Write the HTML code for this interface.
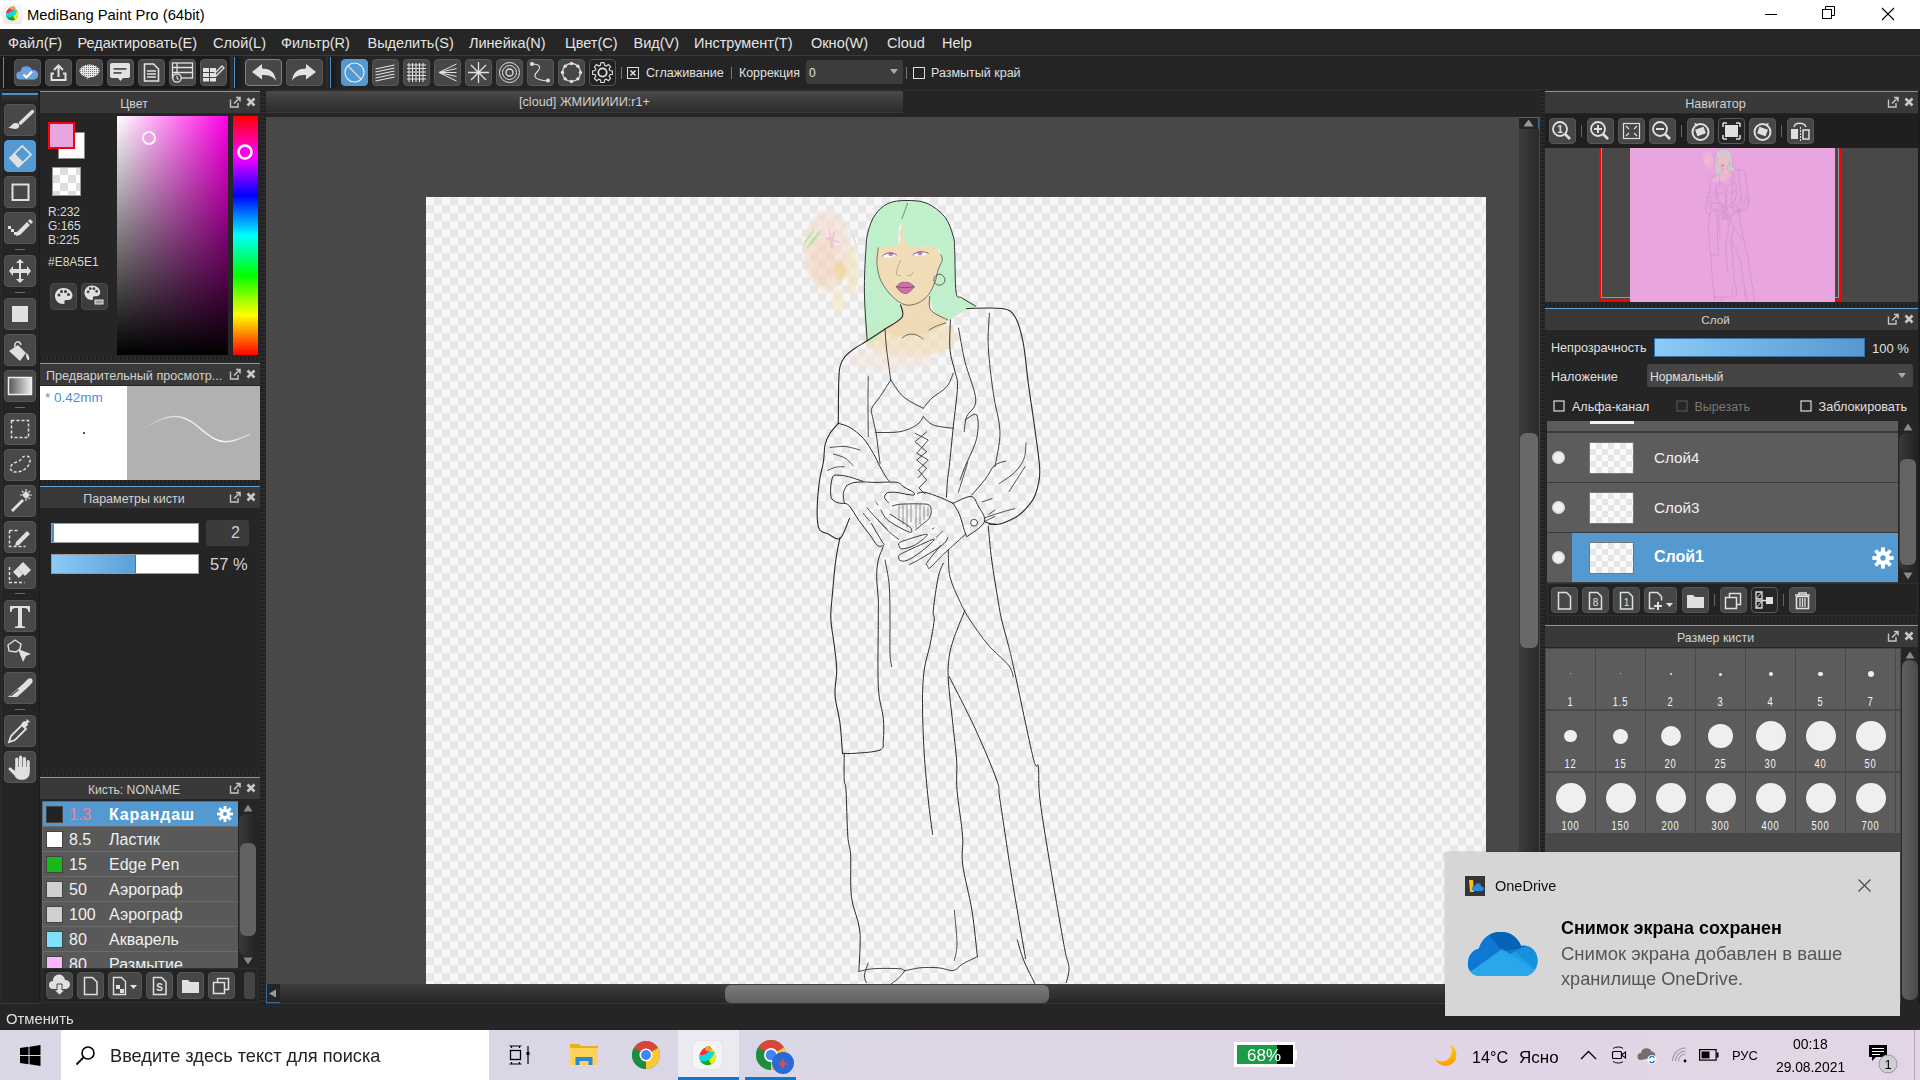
<!DOCTYPE html>
<html><head><meta charset="utf-8">
<style>
*{box-sizing:border-box;margin:0;padding:0}
html,body{width:1920px;height:1080px;overflow:hidden;background:#252525;font-family:"Liberation Sans",sans-serif;color:#ddd}
.a{position:absolute}
.t{position:absolute;white-space:nowrap;line-height:1}
.b{position:absolute;background:#474747;border:1px solid #585858;border-radius:4px}
svg{position:absolute;overflow:visible}

</style></head><body>
<div class="a" style="left:0px;top:0px;width:1920px;height:29px;background:#fff"></div>
<div class="a" style="left:0px;top:29px;width:1920px;height:26px;background:#262626"></div>
<div class="a" style="left:0px;top:55px;width:1920px;height:1px;background:#3a3a3a"></div>
<div class="a" style="left:0px;top:56px;width:1920px;height:33px;background:#242424"></div>
<div class="a" style="left:0px;top:56px;width:230px;height:33px;background:#1a1a1a"></div>
<div class="a" style="left:235px;top:56px;width:10px;height:33px;background:linear-gradient(90deg,#1a1a1a,#242424)"></div>
<div class="a" style="left:331px;top:56px;width:10px;height:33px;background:linear-gradient(90deg,#1a1a1a,#242424)"></div>
<div class="a" style="left:0px;top:89px;width:1920px;height:941px;background:#252525"></div>
<div class="a" style="left:2.5px;top:4px;width:19px;height:19.5px;background:linear-gradient(#f8f8f8,#ebebeb);border-radius:4px;box-shadow:0 0 1px #ccc"></div>
<svg style="left:0px;top:0px;" width="24" height="24" viewBox="0 0 24 24"><defs><clipPath id="drp"><path d="M13.6 6.3C10 7 6 10.2 6 14.6 6 18.2 8.6 20.6 12 20.6 15.4 20.6 18.1 18.2 18.1 14.6 18.1 11.6 16.5 9.4 13.6 6.3z"/></clipPath></defs><g clip-path="url(#drp)"><rect x="0" y="0" width="24" height="24" fill="#18a818"/><ellipse cx="17" cy="14" rx="4" ry="6" fill="#f0f000"/><path d="M5 12C9 10 13 9 17 10.5 16 15 13 17 9 17.5 6 17.5 5 16 5 12z" fill="#10d8e0"/><path d="M5 5H15C15 9 12 12 8 13L5 13z" fill="#ff2a40"/><path d="M10 5H16L15 9C13 10 11 10 10 9z" fill="#ffa030"/></g></svg>
<div class="t" style="left:27px;top:7.5px;font-size:14.8px;color:#000;">MediBang Paint Pro (64bit)</div>
<div class="a" style="left:1765px;top:14px;width:12px;height:1px;background:#000"></div>
<svg style="left:1822px;top:6px;" width="14" height="14" viewBox="0 0 14 14"><rect x="0.5" y="3.5" width="9" height="9" fill="none" stroke="#000"/><path d="M3.5 3.5V0.5H12.5V9.5H9.5" fill="none" stroke="#000"/></svg>
<svg style="left:1881px;top:7px;" width="14" height="14" viewBox="0 0 14 14"><path d="M1 1L13 13M13 1L1 13" stroke="#000" stroke-width="1.1"/></svg>
<div class="t" style="left:8px;top:35.5px;font-size:14.5px;color:#e4e4e4;">Файл(F)</div>
<div class="t" style="left:77.5px;top:35.5px;font-size:14.5px;color:#e4e4e4;">Редактировать(E)</div>
<div class="t" style="left:213px;top:35.5px;font-size:14.5px;color:#e4e4e4;">Слой(L)</div>
<div class="t" style="left:281px;top:35.5px;font-size:14.5px;color:#e4e4e4;">Фильтр(R)</div>
<div class="t" style="left:367.5px;top:35.5px;font-size:14.5px;color:#e4e4e4;">Выделить(S)</div>
<div class="t" style="left:469px;top:35.5px;font-size:14.5px;color:#e4e4e4;">Линейка(N)</div>
<div class="t" style="left:565px;top:35.5px;font-size:14.5px;color:#e4e4e4;">Цвет(C)</div>
<div class="t" style="left:633.5px;top:35.5px;font-size:14.5px;color:#e4e4e4;">Вид(V)</div>
<div class="t" style="left:694px;top:35.5px;font-size:14.5px;color:#e4e4e4;">Инструмент(T)</div>
<div class="t" style="left:811px;top:35.5px;font-size:14.5px;color:#e4e4e4;">Окно(W)</div>
<div class="t" style="left:887px;top:35.5px;font-size:14.5px;color:#e4e4e4;">Cloud</div>
<div class="t" style="left:942px;top:35.5px;font-size:14.5px;color:#e4e4e4;">Help</div>
<div class="a" style="left:3px;top:57px;width:1px;height:31px;background:#4a8fcc"></div>
<div class="a" style="left:230px;top:56px;width:3px;height:33px;background:#2c2c2c"></div>
<div class="a" style="left:234px;top:57px;width:1px;height:31px;background:#4a8fcc"></div>
<div class="a" style="left:326px;top:56px;width:2px;height:33px;background:#2c2c2c"></div>
<div class="a" style="left:330px;top:57px;width:1px;height:31px;background:#4a8fcc"></div>
<div class="b" style="left:14px;top:59px;width:27px;height:27px;"></div>
<div class="b" style="left:45px;top:59px;width:27px;height:27px;"></div>
<div class="b" style="left:76px;top:59px;width:27px;height:27px;"></div>
<div class="b" style="left:107px;top:59px;width:27px;height:27px;"></div>
<div class="b" style="left:138px;top:59px;width:27px;height:27px;"></div>
<div class="b" style="left:169px;top:59px;width:27px;height:27px;"></div>
<div class="b" style="left:200px;top:59px;width:27px;height:27px;"></div>
<svg style="left:14px;top:59px;" width="27" height="27" viewBox="0 0 27 27"><path d="M6 20.5a4 4 0 0 1 0.5-8 6 6 0 0 1 11.5-1.5 4.8 4.8 0 0 1 2.5 9.5z" fill="#6aa3dc"/><path d="M9.5 15.5l3 3 5.5-6" stroke="#fff" stroke-width="2.2" fill="none"/></svg>
<svg style="left:45px;top:59px;" width="27" height="27" viewBox="0 0 27 27"><path d="M9 14.5h-2.5v6.5h14v-6.5H18" stroke="#e2e2e2" stroke-width="2" fill="none"/><path d="M13.5 18V7" stroke="#e2e2e2" stroke-width="2"/><path d="M9 11l4.5-4.5 4.5 4.5" stroke="#e2e2e2" stroke-width="2" fill="none"/></svg>
<svg style="left:76px;top:59px;" width="27" height="27" viewBox="0 0 27 27"><defs><pattern id="gp" width="2" height="2" patternUnits="userSpaceOnUse"><rect width="2" height="2" fill="#e6e6e6"/><rect width="1" height="1" fill="#777"/></pattern></defs><ellipse cx="13.5" cy="12" rx="10" ry="6.5" fill="url(#gp)"/><path d="M12 17.5l-2 3 5-3z" fill="#e6e6e6"/></svg>
<svg style="left:107px;top:59px;" width="27" height="27" viewBox="0 0 27 27"><rect x="3" y="4" width="20" height="15" rx="2" fill="#e2e2e2"/><path d="M11 19l2.5 3 2.5-3z" fill="#e2e2e2"/><rect x="6.5" y="9" width="13" height="1.8" fill="#555"/><rect x="6.5" y="13" width="8" height="1.8" fill="#555"/></svg>
<svg style="left:138px;top:59px;" width="27" height="27" viewBox="0 0 27 27"><path d="M6.5 5h9l5 5v12h-14z" fill="none" stroke="#e2e2e2" stroke-width="1.6"/><path d="M9 12h9M9 15h9M9 18h9" stroke="#e2e2e2" stroke-width="1.4"/></svg>
<svg style="left:169px;top:59px;" width="27" height="27" viewBox="0 0 27 27"><rect x="3.5" y="4" width="20" height="15" fill="none" stroke="#e2e2e2" stroke-width="1.3"/><path d="M3.5 8.5h20M3.5 13.5h20M8 4v9" stroke="#e2e2e2" stroke-width="1.3"/><circle cx="8" cy="19" r="4.2" fill="#474747" stroke="#e2e2e2" stroke-width="1.3"/><path d="M8 16.5v2.5l1.5 1.5" stroke="#e2e2e2" stroke-width="1.1" fill="none"/></svg>
<svg style="left:200px;top:59px;" width="27" height="27" viewBox="0 0 27 27"><path d="M3 9h6v4H3zM10 9h6v4h-6zM3 14h6v4H3zM10 14h6v4h-6zM3 19h6v3.5H3zM10 19h6v3.5h-6z" fill="#e2e2e2"/><path d="M14 15l8-8 2 2-8 8h-2z" fill="none" stroke="#e2e2e2" stroke-width="1.3"/></svg>
<div class="b" style="left:245px;top:59px;width:37px;height:27px;border-color:#4a90d0"></div>
<svg style="left:245px;top:59px;" width="37" height="27" viewBox="0 0 37 27"><path d="M7 13L17 5V9.5C25 9.5 30 13 31 22 28 17 24 16 17 16V20.5Z" fill="#e2e2e2"/></svg>
<div class="b" style="left:286px;top:59px;width:37px;height:27px;"></div>
<svg style="left:286px;top:59px;" width="37" height="27" viewBox="0 0 37 27"><path d="M30 13L20 5V9.5C12 9.5 7 13 6 22 9 17 13 16 20 16V20.5Z" fill="#e2e2e2"/></svg>
<div class="b" style="left:341px;top:59px;width:27px;height:27px;background:#5499d2;border-color:#5499d2"></div>
<svg style="left:341px;top:59px;" width="27" height="27" viewBox="0 0 27 27"><circle cx="13.5" cy="13.5" r="9.5" fill="none" stroke="#ececec" stroke-width="1.2"/><path d="M7 6.8l13 13.4" stroke="#ececec" stroke-width="1.2"/></svg>
<div class="b" style="left:372px;top:59px;width:27px;height:27px;"></div>
<div class="b" style="left:403px;top:59px;width:27px;height:27px;"></div>
<div class="b" style="left:434px;top:59px;width:27px;height:27px;"></div>
<div class="b" style="left:465px;top:59px;width:27px;height:27px;"></div>
<div class="b" style="left:496px;top:59px;width:27px;height:27px;"></div>
<div class="b" style="left:527px;top:59px;width:27px;height:27px;"></div>
<div class="b" style="left:558px;top:59px;width:27px;height:27px;"></div>
<svg style="left:372px;top:59px;" width="27" height="27" viewBox="0 0 27 27"><path d="M3.5 10l19-4M3.5 13l19-4M3.5 16l19-4M3.5 19l19-4M3.5 22l19-4" stroke="#e2e2e2" stroke-width="1.1"/></svg>
<svg style="left:403px;top:59px;" width="27" height="27" viewBox="0 0 27 27"><path d="M4 6h19M4 9.5h19M4 13h19M4 16.5h19M4 20h19M6 4v19M9.5 4v19M13 4v19M16.5 4v19M20 4v19" stroke="#e2e2e2" stroke-width="1"/></svg>
<svg style="left:434px;top:59px;" width="27" height="27" viewBox="0 0 27 27"><path d="M22.5 5L5 13.5 22.5 22M22.5 9.5L5 13.5 22.5 17.5M22.5 13.5H5" stroke="#e2e2e2" stroke-width="1" fill="none"/></svg>
<svg style="left:465px;top:59px;" width="27" height="27" viewBox="0 0 27 27"><path d="M13.5 3v21M3 13.5h21M6 6l15 15M21 6L6 21" stroke="#e2e2e2" stroke-width="1.3"/></svg>
<svg style="left:496px;top:59px;" width="27" height="27" viewBox="0 0 27 27"><circle cx="13.5" cy="13.5" r="10" fill="none" stroke="#e2e2e2" stroke-width="1"/><circle cx="13.5" cy="13.5" r="7" fill="none" stroke="#e2e2e2" stroke-width="1"/><circle cx="13.5" cy="13.5" r="3.5" fill="none" stroke="#e2e2e2" stroke-width="1.3"/></svg>
<svg style="left:527px;top:59px;" width="27" height="27" viewBox="0 0 27 27"><path d="M5 5c9 0 9 4 5 8s-3 8 11 9" stroke="#e2e2e2" stroke-width="1.1" fill="none"/><circle cx="5" cy="5" r="2" fill="#e2e2e2"/><circle cx="21" cy="21.5" r="2" fill="#e2e2e2"/></svg>
<svg style="left:558px;top:59px;" width="27" height="27" viewBox="0 0 27 27"><circle cx="13.5" cy="13.5" r="9" fill="none" stroke="#e2e2e2" stroke-width="1.3"/><circle cx="22.50" cy="13.50" r="1.7" fill="#e2e2e2"/><circle cx="19.86" cy="19.86" r="1.7" fill="#e2e2e2"/><circle cx="13.50" cy="22.50" r="1.7" fill="#e2e2e2"/><circle cx="7.14" cy="19.86" r="1.7" fill="#e2e2e2"/><circle cx="4.50" cy="13.50" r="1.7" fill="#e2e2e2"/><circle cx="7.14" cy="7.14" r="1.7" fill="#e2e2e2"/><circle cx="13.50" cy="4.50" r="1.7" fill="#e2e2e2"/><circle cx="19.86" cy="7.14" r="1.7" fill="#e2e2e2"/></svg>
<div class="b" style="left:589px;top:59px;width:27px;height:27px;background:#222;border-color:#555"></div>
<svg style="left:589px;top:59px;" width="27" height="27" viewBox="0 0 27 27"><path d="M13.5 3.5l1.6 0.2 0.5 2.6 1.6 0.7 2.2-1.5 2.2 2.2-1.5 2.2 0.7 1.6 2.6 0.5v3.2l-2.6 0.5-0.7 1.6 1.5 2.2-2.2 2.2-2.2-1.5-1.6 0.7-0.5 2.6h-3.2l-0.5-2.6-1.6-0.7-2.2 1.5-2.2-2.2 1.5-2.2-0.7-1.6-2.6-0.5v-3.2l2.6-0.5 0.7-1.6-1.5-2.2 2.2-2.2 2.2 1.5 1.6-0.7 0.5-2.6z" fill="none" stroke="#e2e2e2" stroke-width="1.1"/><circle cx="13.5" cy="13.5" r="4.2" fill="none" stroke="#e2e2e2" stroke-width="1.8"/></svg>
<div class="a" style="left:621px;top:67px;width:1px;height:12px;background:#6a7a8a"></div>
<svg style="left:627px;top:67px;" width="13" height="13" viewBox="0 0 13 13"><rect x="0.5" y="0.5" width="11" height="11" fill="none" stroke="#ddd"/><path d="M3.5 3.5l5 5M8.5 3.5l-5 5" stroke="#ddd" stroke-width="1.6"/></svg>
<div class="t" style="left:646px;top:66.5px;font-size:12.6px;color:#e0e0e0;">Сглаживание</div>
<div class="a" style="left:731px;top:67px;width:1px;height:12px;background:#6a7a8a"></div>
<div class="t" style="left:739px;top:67px;font-size:12.4px;color:#e0e0e0;">Коррекция</div>
<div class="a" style="left:806px;top:60px;width:97px;height:24px;background:#3c3c3c;border-radius:3px"></div>
<div class="t" style="left:809px;top:66.5px;font-size:12px;color:#e0e0e0;">0</div>
<svg style="left:890px;top:69px;" width="9" height="6" viewBox="0 0 9 6"><path d="M0 0h8l-4 5z" fill="#aaa"/></svg>
<div class="a" style="left:906px;top:67px;width:1px;height:12px;background:#6a7a8a"></div>
<svg style="left:913px;top:67px;" width="13" height="13" viewBox="0 0 13 13"><rect x="0.5" y="0.5" width="11" height="11" fill="none" stroke="#ddd"/></svg>
<div class="t" style="left:931px;top:66.5px;font-size:12.5px;color:#e0e0e0;">Размытый край</div>
<div class="a" style="left:0px;top:89px;width:1920px;height:2px;background:#2b2b2b"></div>
<div class="a" style="left:260px;top:89px;width:6px;height:915px;background:repeating-linear-gradient(0deg,#212121 0 2px,#2a2a2a 2px 4px)"></div>
<div class="a" style="left:1540px;top:89px;width:5px;height:915px;background:repeating-linear-gradient(0deg,#212121 0 2px,#2a2a2a 2px 4px)"></div>
<div class="a" style="left:266px;top:91px;width:637px;height:22px;background:linear-gradient(#4a4a4a,#2b2b2b);border-bottom:1px solid #3a3a3a;border-radius:2px 2px 0 0"></div>
<div class="t" style="left:519px;top:96px;font-size:12.7px;color:#d0d0d0;">[cloud] ЖМИИИИИ:r1+</div>
<div class="a" style="left:266px;top:117px;width:1274px;height:867px;background:#4a4846"></div>
<div class="a" style="left:426px;top:197px;width:1060px;height:787px;background:conic-gradient(#e8e8e8 0 25%,#f7f7f7 0 50%,#e8e8e8 0 75%,#f7f7f7 0);background-size:16px 16px"></div>
<div class="a" style="left:1519px;top:117px;width:20px;height:867px;background:linear-gradient(90deg,#3c3c3c,#2a2a2a)"></div>
<div class="a" style="left:1519px;top:117px;width:20px;height:12px;background:#252525;border-top:1px solid #3a6a96;border-right:1px solid #3a6a96"></div>
<svg style="left:1523px;top:119px;" width="11" height="8" viewBox="0 0 11 8"><path d="M0.5 7.5L5.5 0.5 10.5 7.5z" fill="#9a9a9a"/></svg>
<div class="a" style="left:1520px;top:433px;width:18px;height:215px;background:#686868;border-radius:6px"></div>
<div class="a" style="left:266px;top:984px;width:1253px;height:19px;background:linear-gradient(#3e3e3e,#262626)"></div>
<div class="a" style="left:266px;top:984px;width:14px;height:19px;background:#252525;border-left:1px solid #3a6a96;border-bottom:1px solid #3a6a96"></div>
<svg style="left:268px;top:989px;" width="9" height="9" viewBox="0 0 9 9"><path d="M8 0.5L1 4.5 8 8.5z" fill="#9a9a9a"/></svg>
<div class="a" style="left:725px;top:985px;width:324px;height:18px;background:linear-gradient(#7a7a7a,#616161);border-radius:6px"></div>
<div class="a" style="left:266px;top:1003px;width:1274px;height:2px;background:#3a3a3a"></div>
<div class="a" style="left:0px;top:91px;width:40px;height:913px;background:#242424;border-right:1px solid #1c1c1c"></div>
<div class="a" style="left:1px;top:91px;width:1px;height:913px;background:#2e2e2e"></div>
<div class="a" style="left:2px;top:93px;width:36px;height:2px;background:#4a90cc"></div>
<div class="a" style="left:2px;top:95px;width:36px;height:8px;background:linear-gradient(#333,#262626)"></div>
<div class="b" style="left:4px;top:104px;width:32px;height:32px;background:#484848;border-color:#565656"></div>
<div class="b" style="left:4px;top:140px;width:32px;height:32px;background:#5499d2;border-color:#5499d2"></div>
<div class="b" style="left:4px;top:176px;width:32px;height:32px;background:#484848;border-color:#565656"></div>
<div class="b" style="left:4px;top:212px;width:32px;height:32px;background:#484848;border-color:#565656"></div>
<div class="b" style="left:4px;top:255px;width:32px;height:32px;background:#484848;border-color:#565656"></div>
<div class="b" style="left:4px;top:298px;width:32px;height:32px;background:#484848;border-color:#565656"></div>
<div class="b" style="left:4px;top:334px;width:32px;height:32px;background:#484848;border-color:#565656"></div>
<div class="b" style="left:4px;top:370px;width:32px;height:32px;background:#484848;border-color:#565656"></div>
<div class="b" style="left:4px;top:413px;width:32px;height:32px;background:#484848;border-color:#565656"></div>
<div class="b" style="left:4px;top:449px;width:32px;height:32px;background:#484848;border-color:#565656"></div>
<div class="b" style="left:4px;top:485px;width:32px;height:32px;background:#484848;border-color:#565656"></div>
<div class="b" style="left:4px;top:521px;width:32px;height:32px;background:#484848;border-color:#565656"></div>
<div class="b" style="left:4px;top:557px;width:32px;height:32px;background:#484848;border-color:#565656"></div>
<div class="b" style="left:4px;top:600px;width:32px;height:32px;background:#484848;border-color:#565656"></div>
<div class="b" style="left:4px;top:636px;width:32px;height:32px;background:#484848;border-color:#565656"></div>
<div class="b" style="left:4px;top:672px;width:32px;height:32px;background:#484848;border-color:#565656"></div>
<div class="b" style="left:4px;top:715px;width:32px;height:32px;background:#484848;border-color:#565656"></div>
<div class="b" style="left:4px;top:751px;width:32px;height:32px;background:#484848;border-color:#565656"></div>
<div class="a" style="left:15px;top:249px;width:10px;height:1px;background:#5f6f80"></div>
<div class="a" style="left:15px;top:292px;width:10px;height:1px;background:#5f6f80"></div>
<div class="a" style="left:15px;top:407px;width:10px;height:1px;background:#5f6f80"></div>
<div class="a" style="left:15px;top:593px;width:10px;height:1px;background:#5f6f80"></div>
<div class="a" style="left:15px;top:709px;width:10px;height:1px;background:#5f6f80"></div>
<svg style="left:4px;top:104px;" width="32" height="32" viewBox="0 0 32 32"><path d="M28.5 7.5L16.5 19" stroke="#e0e0e0" stroke-width="3.4" stroke-linecap="round"/><path d="M4 23.5C7 23 8 19.5 11 19 14 18.5 16 20.5 15 23 14 25.5 10 25.5 4 23.5z" fill="#e0e0e0"/></svg>
<svg style="left:4px;top:140px;" width="32" height="32" viewBox="0 0 32 32"><path d="M18.2 5.8L27 14.7 14.3 26.9 6 18.2z" fill="none" stroke="#e0e0e0" stroke-width="1.8" stroke-linejoin="round"/><path d="M6 18.2L10.8 13.5 19.4 22.3 14.3 26.9z" fill="#e0e0e0"/></svg>
<svg style="left:4px;top:176px;" width="32" height="32" viewBox="0 0 32 32"><rect x="8.5" y="8.5" width="16" height="15.5" fill="none" stroke="#e0e0e0" stroke-width="2"/></svg>
<svg style="left:4px;top:212px;" width="32" height="32" viewBox="0 0 32 32"><rect x="4" y="14" width="3" height="3" fill="#e0e0e0"/><rect x="7" y="17" width="3" height="3" fill="#e0e0e0"/><rect x="10" y="20" width="3" height="3" fill="#e0e0e0"/><path d="M13 20l10-10 3 3-10 10-4 1z" fill="#e0e0e0"/><path d="M24 9l2-2 3 3-2 2z" fill="#e0e0e0"/></svg>
<svg style="left:4px;top:255px;" width="32" height="32" viewBox="0 0 32 32"><path d="M16 4l4 4h-3v6h6v-3l4 5-4 5v-3h-6v6h3l-4 4-4-4h3v-6H9v3l-4-5 4-5v3h6V8h-3z" fill="#e0e0e0"/></svg>
<svg style="left:4px;top:298px;" width="32" height="32" viewBox="0 0 32 32"><rect x="8" y="8" width="16" height="16" fill="#e0e0e0"/></svg>
<svg style="left:4px;top:334px;" width="32" height="32" viewBox="0 0 32 32"><path d="M5 17l9-6 8 8-6 8z" fill="#e0e0e0"/><path d="M11 13c-1-6 5-7 6-2" stroke="#e0e0e0" stroke-width="1.5" fill="none"/><path d="M22 19c2 1 4 4 3 7-2 1-3-3-3-7z" fill="#e0e0e0"/></svg>
<svg style="left:4px;top:370px;" width="32" height="32" viewBox="0 0 32 32"><defs><linearGradient id="tg" x1="0" x2="1"><stop offset="0" stop-color="#555"/><stop offset="1" stop-color="#eee"/></linearGradient></defs><rect x="4.5" y="7.5" width="23" height="17" fill="url(#tg)" stroke="#eee" stroke-width="1.5"/></svg>
<svg style="left:4px;top:413px;" width="32" height="32" viewBox="0 0 32 32"><rect x="7.5" y="7.5" width="17" height="17" fill="none" stroke="#e0e0e0" stroke-width="1.5" stroke-dasharray="3 2"/></svg>
<svg style="left:4px;top:449px;" width="32" height="32" viewBox="0 0 32 32"><path d="M8 22c-4-3 0-8 5-9 5-1 4-6 9-6 5 0 5 6 2 10-3 4-10 8-16 5z" fill="none" stroke="#e0e0e0" stroke-width="1.5" stroke-dasharray="3 2"/></svg>
<svg style="left:4px;top:485px;" width="32" height="32" viewBox="0 0 32 32"><path d="M7 25l11-11 2 2-11 11z" fill="#e0e0e0"/><circle cx="22" cy="10" r="3" fill="#e0e0e0"/><path d="M22 4v3M22 13v3M16 10h3M25 10h3M18 6l1.5 1.5M26 6l-1.5 1.5M26 14l-1.5-1.5" stroke="#e0e0e0" stroke-width="1.2"/></svg>
<svg style="left:4px;top:521px;" width="32" height="32" viewBox="0 0 32 32"><path d="M5.5 9.5v16h16" fill="none" stroke="#e0e0e0" stroke-width="1.5" stroke-dasharray="3 2"/><path d="M5.5 9.5h8" stroke="#e0e0e0" stroke-width="1.5" stroke-dasharray="3 2"/><path d="M12 21l11-11 3 3-11 11-4 1z" fill="#e0e0e0"/></svg>
<svg style="left:4px;top:557px;" width="32" height="32" viewBox="0 0 32 32"><path d="M5.5 10v15.5h15" fill="none" stroke="#e0e0e0" stroke-width="1.5" stroke-dasharray="3 2"/><path d="M19 5l8 8-6 6-8-8z" fill="#e0e0e0"/><path d="M13 11l-4 4 6 6 4-4z" fill="#e0e0e0"/></svg>
<svg style="left:4px;top:600px;" width="32" height="32" viewBox="0 0 32 32"><path d="M6 6h20v6h-1.5c-0.5-3-1.5-4-4-4H18v17c0 1 1 1.5 3 1.5V28H11v-1.5c2 0 3-0.5 3-1.5V8h-2.5c-2.5 0-3.5 1-4 4H6z" fill="#e0e0e0"/></svg>
<svg style="left:4px;top:636px;" width="32" height="32" viewBox="0 0 32 32"><path d="M4 9l7-5 6 4-1 5-4 3-7-1z" fill="none" stroke="#e0e0e0" stroke-width="1.4"/><path d="M14 13l13 5-5 2-3 6z" fill="#e0e0e0"/></svg>
<svg style="left:4px;top:672px;" width="32" height="32" viewBox="0 0 32 32"><path d="M4 25l15-13 5-5c3-2 6 1 4 4l-6 6-9 8z" fill="#e0e0e0"/><path d="M6.5 24l8-6.5" stroke="#484848" stroke-width="1.3"/><path d="M6 24.5l13-11" stroke="#484848" stroke-width="0"/></svg>
<svg style="left:4px;top:715px;" width="32" height="32" viewBox="0 0 32 32"><path d="M5 27l2-6 11-11 4 4-11 11z" fill="none" stroke="#e0e0e0" stroke-width="1.8"/><path d="M17 9l3-3 2 0.5 1-2.5 3 3-2.5 1 0.5 2-3 3z" fill="#e0e0e0"/></svg>
<svg style="left:4px;top:751px;" width="32" height="32" viewBox="0 0 32 32"><g fill="#e0e0e0"><rect x="11.2" y="6.5" width="3.2" height="14" rx="1.6"/><rect x="15" y="4.4" width="3.2" height="15" rx="1.6"/><rect x="18.8" y="6" width="3.2" height="14" rx="1.6"/><rect x="22.6" y="9" width="3.1" height="11" rx="1.5"/><path d="M11.2 16H25.7V21C25.7 25 23.5 28.7 19 28.7H16C13 28.7 11.5 26.5 10.5 24.5L4.8 18.8C3.8 17.5 5.3 15.8 6.8 16.8L11.2 20z"/></g></svg>
<div class="a" style="left:40px;top:91px;width:220px;height:913px;background:#252525"></div>
<div class="a" style="left:40px;top:90px;width:220px;height:1px;background:#2a2a2a"></div>
<div class="a" style="left:40px;top:91px;width:220px;height:1.5px;background:#5aa0dc"></div>
<div class="a" style="left:40px;top:92px;width:220px;height:21px;background:#3a3939"></div>
<div class="t" style="left:40px;top:97.5px;width:188px;text-align:center;font-size:12.3px;color:#d2d2d2">Цвет</div>
<svg style="left:229px;top:96px;" width="12" height="12" viewBox="0 0 12 12"><path d="M1.5 3.5v7.5h7.5V7" fill="none" stroke="#c4c4c4" stroke-width="1.4"/><path d="M5 7.5l5.5-5.5M7 1.5h4v4" fill="none" stroke="#c4c4c4" stroke-width="1.6"/></svg>
<svg style="left:246px;top:96.5px;" width="10" height="10" viewBox="0 0 10 10"><path d="M1.5 1.5l7 7M8.5 1.5l-7 7" stroke="#c8c8c8" stroke-width="2.6"/></svg>
<div class="a" style="left:48px;top:122px;width:27px;height:27px;background:#e8a5e1;border:2px solid #ff0000"></div>
<div class="a" style="left:58px;top:132px;width:27px;height:27px;background:#fff;border:1px solid #888"></div>
<div class="a" style="left:48px;top:122px;width:27px;height:27px;background:#e8a5e1;border:2px solid #ff0000"></div>
<div class="a" style="left:52px;top:167px;width:29px;height:29px;background:conic-gradient(#ddd 0 25%,#fff 0 50%,#ddd 0 75%,#fff 0);background-size:16px 16px;background-position:-1px -1px;border:1px solid #999"></div>
<div class="t" style="left:48px;top:205.5px;font-size:12px;color:#d8d8d8;">R:232</div>
<div class="t" style="left:48px;top:219.5px;font-size:12px;color:#d8d8d8;">G:165</div>
<div class="t" style="left:48px;top:233.5px;font-size:12px;color:#d8d8d8;">B:225</div>
<div class="t" style="left:48px;top:255.5px;font-size:12px;color:#d8d8d8;">#E8A5E1</div>
<div class="b" style="left:50px;top:283px;width:27px;height:27px;background:#3c3c3c;border-color:#4a4a4a"></div>
<div class="b" style="left:81px;top:283px;width:27px;height:27px;background:#3c3c3c;border-color:#4a4a4a"></div>
<svg style="left:50px;top:283px;" width="27" height="27" viewBox="0 0 27 27"><path d="M13.5 5c-5 0-8.5 3.5-8.5 8 0 4.5 3.5 8 8 8 1.5 0 2-1 1.5-2-0.5-1 0-2 1.5-2h2c2.5 0 4.5-1.5 4.5-4.5 0-4-4-7.5-9-7.5z" fill="#e0e0e0"/><circle cx="9" cy="12" r="1.5" fill="#3c3c3c"/><circle cx="11.5" cy="8.5" r="1.5" fill="#3c3c3c"/><circle cx="15.5" cy="8.5" r="1.5" fill="#3c3c3c"/><circle cx="18.5" cy="11.5" r="1.5" fill="#3c3c3c"/></svg>
<svg style="left:81px;top:283px;" width="27" height="27" viewBox="0 0 27 27"><g transform="translate(-1,-2) scale(0.9)"><path d="M13.5 5c-5 0-8.5 3.5-8.5 8 0 4.5 3.5 8 8 8 1.5 0 2-1 1.5-2-0.5-1 0-2 1.5-2h2c2.5 0 4.5-1.5 4.5-4.5 0-4-4-7.5-9-7.5z" fill="#e0e0e0"/><circle cx="9" cy="12" r="1.5" fill="#3c3c3c"/><circle cx="11.5" cy="8.5" r="1.5" fill="#3c3c3c"/><circle cx="15.5" cy="8.5" r="1.5" fill="#3c3c3c"/><circle cx="18.5" cy="11.5" r="1.5" fill="#3c3c3c"/></g><rect x="13" y="16" width="10" height="6" fill="#e0e0e0" stroke="#3c3c3c"/><rect x="14.5" y="17.5" width="7" height="3" fill="#999"/></svg>
<div class="a" style="left:117px;top:116px;width:111px;height:239px;background:linear-gradient(transparent,#000),linear-gradient(90deg,#fff,#ff00e6)"></div>
<svg style="left:139px;top:128px;" width="20" height="20" viewBox="0 0 20 20"><circle cx="10" cy="10" r="6" fill="#e8a5e1" stroke="#f4f4f4" stroke-width="2"/></svg>
<div class="a" style="left:233px;top:116px;width:25px;height:239px;background:linear-gradient(#ff0000,#ff00ff 16.7%,#0000ff 33.3%,#00ffff 50%,#00ff00 66.7%,#ffff00 83.3%,#ff0000)"></div>
<svg style="left:235px;top:142px;" width="20" height="20" viewBox="0 0 20 20"><circle cx="10" cy="10" r="6.5" fill="#ff00e6" stroke="#fff" stroke-width="2.6"/></svg>
<div class="a" style="left:40px;top:356px;width:220px;height:6px;background:repeating-linear-gradient(90deg,#212121 0 2px,#2a2a2a 2px 4px)"></div>
<div class="a" style="left:40px;top:362px;width:220px;height:1px;background:#2a2a2a"></div>
<div class="a" style="left:40px;top:363px;width:220px;height:1.5px;background:#5aa0dc"></div>
<div class="a" style="left:40px;top:364px;width:220px;height:21px;background:#3a3939"></div>
<div class="t" style="left:46px;top:369.5px;font-size:12.6px;color:#d2d2d2;">Предварительный просмотр...</div>
<svg style="left:229px;top:368px;" width="12" height="12" viewBox="0 0 12 12"><path d="M1.5 3.5v7.5h7.5V7" fill="none" stroke="#c4c4c4" stroke-width="1.4"/><path d="M5 7.5l5.5-5.5M7 1.5h4v4" fill="none" stroke="#c4c4c4" stroke-width="1.6"/></svg>
<svg style="left:246px;top:368.5px;" width="10" height="10" viewBox="0 0 10 10"><path d="M1.5 1.5l7 7M8.5 1.5l-7 7" stroke="#c8c8c8" stroke-width="2.6"/></svg>
<div class="a" style="left:40px;top:386px;width:87px;height:94px;background:#fff"></div>
<div class="a" style="left:127px;top:386px;width:133px;height:94px;background:#b1b1b1"></div>
<div class="t" style="left:45px;top:391px;font-size:13.5px;color:#4a90d8;">* 0.42mm</div>
<div class="a" style="left:83px;top:432px;width:2px;height:2px;background:#555"></div>
<svg style="left:127px;top:386px;" width="133" height="94" viewBox="0 0 133 94"><defs><linearGradient id="wg" x1="0" x2="1"><stop offset="0" stop-color="#fff" stop-opacity="0"/><stop offset="0.35" stop-color="#f0f0f0" stop-opacity=".8"/><stop offset="0.7" stop-color="#fafafa"/><stop offset="1" stop-color="#fff" stop-opacity=".4"/></linearGradient></defs><path d="M14 43.6C30 35 40 30 48.4 30.5 60 31 68 38 75.7 44.6 84 51 90 56 99 55.8 108 55.6 115 52 123.3 48" fill="none" stroke="url(#wg)" stroke-width="1.5"/></svg>
<div class="a" style="left:40px;top:480px;width:220px;height:6px;background:repeating-linear-gradient(90deg,#212121 0 2px,#2a2a2a 2px 4px)"></div>
<div class="a" style="left:40px;top:485px;width:220px;height:1px;background:#2a2a2a"></div>
<div class="a" style="left:40px;top:486px;width:220px;height:1.5px;background:#5aa0dc"></div>
<div class="a" style="left:40px;top:487px;width:220px;height:21px;background:#3a3939"></div>
<div class="t" style="left:40px;top:492.5px;width:188px;text-align:center;font-size:12.5px;color:#d2d2d2">Параметры кисти</div>
<svg style="left:229px;top:491px;" width="12" height="12" viewBox="0 0 12 12"><path d="M1.5 3.5v7.5h7.5V7" fill="none" stroke="#c4c4c4" stroke-width="1.4"/><path d="M5 7.5l5.5-5.5M7 1.5h4v4" fill="none" stroke="#c4c4c4" stroke-width="1.6"/></svg>
<svg style="left:246px;top:491.5px;" width="10" height="10" viewBox="0 0 10 10"><path d="M1.5 1.5l7 7M8.5 1.5l-7 7" stroke="#c8c8c8" stroke-width="2.6"/></svg>
<div class="a" style="left:51px;top:523px;width:148px;height:20px;background:#fff;border:1px solid #9a9a9a"></div>
<div class="a" style="left:52px;top:524px;width:2px;height:18px;background:#4a8fcc"></div>
<div class="a" style="left:206px;top:520px;width:43px;height:26px;background:#3b3b3b;border-radius:3px"></div>
<div class="t" style="left:231px;top:525px;font-size:16px;color:#cfcfcf;">2</div>
<div class="a" style="left:51px;top:554px;width:148px;height:20px;background:#fff;border:1px solid #9a9a9a"></div>
<div class="a" style="left:52px;top:555px;width:84px;height:18px;background:linear-gradient(90deg,#8ccaf7,#5a9fd8)"></div>
<div class="a" style="left:135px;top:555px;width:1px;height:18px;background:#3c7ab8"></div>
<div class="t" style="left:210px;top:556px;font-size:16.5px;color:#d4d4d4;">57 %</div>
<div class="a" style="left:40px;top:771px;width:220px;height:6px;background:repeating-linear-gradient(90deg,#212121 0 2px,#2a2a2a 2px 4px)"></div>
<div class="a" style="left:40px;top:776px;width:220px;height:1px;background:#2a2a2a"></div>
<div class="a" style="left:40px;top:777px;width:220px;height:1.5px;background:#5aa0dc"></div>
<div class="a" style="left:40px;top:778px;width:220px;height:21px;background:#3a3939"></div>
<div class="t" style="left:40px;top:783.5px;width:188px;text-align:center;font-size:12.2px;color:#d2d2d2">Кисть: NONAME</div>
<svg style="left:229px;top:782px;" width="12" height="12" viewBox="0 0 12 12"><path d="M1.5 3.5v7.5h7.5V7" fill="none" stroke="#c4c4c4" stroke-width="1.4"/><path d="M5 7.5l5.5-5.5M7 1.5h4v4" fill="none" stroke="#c4c4c4" stroke-width="1.6"/></svg>
<svg style="left:246px;top:782.5px;" width="10" height="10" viewBox="0 0 10 10"><path d="M1.5 1.5l7 7M8.5 1.5l-7 7" stroke="#c8c8c8" stroke-width="2.6"/></svg>
<div class="a" style="left:42px;top:801px;width:196px;height:167px;background:#6a6a6a"></div>
<div class="a" style="left:42px;top:802px;width:196px;height:166px;overflow:hidden">
<div class="a" style="left:1px;top:0px;width:195px;height:24px;background:#5499d0"></div>
<div class="a" style="left:4px;top:4px;width:17px;height:17px;background:#222;border:1px solid #444"></div>
<div class="t" style="left:27px;top:5px;font-size:16px;color:#ff7a8a">1.3</div>
<div class="t" style="left:67px;top:5px;font-size:16px;font-weight:bold;letter-spacing:0.8px;color:#fff">Карандаш</div>
<svg style="left:174px;top:3px" width="18" height="18" viewBox="0 0 18 18"><g fill="#fff"><circle cx="9" cy="9" r="5.2"/><rect x="7.6" y="1" width="2.8" height="4" transform="rotate(0 9 9)"/><rect x="7.6" y="1" width="2.8" height="4" transform="rotate(45 9 9)"/><rect x="7.6" y="1" width="2.8" height="4" transform="rotate(90 9 9)"/><rect x="7.6" y="1" width="2.8" height="4" transform="rotate(135 9 9)"/><rect x="7.6" y="1" width="2.8" height="4" transform="rotate(180 9 9)"/><rect x="7.6" y="1" width="2.8" height="4" transform="rotate(225 9 9)"/><rect x="7.6" y="1" width="2.8" height="4" transform="rotate(270 9 9)"/><rect x="7.6" y="1" width="2.8" height="4" transform="rotate(315 9 9)"/></g><circle cx="9" cy="9" r="2" fill="#5499d0"/></svg>
<div class="a" style="left:1px;top:25px;width:195px;height:24px;background:#595959"></div>
<div class="a" style="left:4px;top:29px;width:17px;height:17px;background:#fff;border:1px solid #444"></div>
<div class="t" style="left:27px;top:30px;font-size:16px;color:#f0f0f0">8.5</div>
<div class="t" style="left:67px;top:30px;font-size:16px;color:#f0f0f0">Ластик</div>
<div class="a" style="left:1px;top:50px;width:195px;height:24px;background:#595959"></div>
<div class="a" style="left:4px;top:54px;width:17px;height:17px;background:#18b818;border:1px solid #444"></div>
<div class="t" style="left:27px;top:55px;font-size:16px;color:#f0f0f0">15</div>
<div class="t" style="left:67px;top:55px;font-size:16px;color:#f0f0f0">Edge Pen</div>
<div class="a" style="left:1px;top:75px;width:195px;height:24px;background:#595959"></div>
<div class="a" style="left:4px;top:79px;width:17px;height:17px;background:#d0d0d0;border:1px solid #444"></div>
<div class="t" style="left:27px;top:80px;font-size:16px;color:#f0f0f0">50</div>
<div class="t" style="left:67px;top:80px;font-size:16px;color:#f0f0f0">Аэрограф</div>
<div class="a" style="left:1px;top:100px;width:195px;height:24px;background:#595959"></div>
<div class="a" style="left:4px;top:104px;width:17px;height:17px;background:#d0d0d0;border:1px solid #444"></div>
<div class="t" style="left:27px;top:105px;font-size:16px;color:#f0f0f0">100</div>
<div class="t" style="left:67px;top:105px;font-size:16px;color:#f0f0f0">Аэрограф</div>
<div class="a" style="left:1px;top:125px;width:195px;height:24px;background:#595959"></div>
<div class="a" style="left:4px;top:129px;width:17px;height:17px;background:#7fe0fa;border:1px solid #444"></div>
<div class="t" style="left:27px;top:130px;font-size:16px;color:#f0f0f0">80</div>
<div class="t" style="left:67px;top:130px;font-size:16px;color:#f0f0f0">Акварель</div>
<div class="a" style="left:1px;top:150px;width:195px;height:24px;background:#595959"></div>
<div class="a" style="left:4px;top:154px;width:17px;height:17px;background:#f9b6f9;border:1px solid #444"></div>
<div class="t" style="left:27px;top:155px;font-size:16px;color:#f0f0f0">80</div>
<div class="t" style="left:67px;top:155px;font-size:16px;color:#f0f0f0">Размытие</div>
</div>
<div class="a" style="left:238px;top:801px;width:20px;height:167px;background:#252525"></div>
<svg style="left:243px;top:804px;" width="10" height="8" viewBox="0 0 10 8"><path d="M0.5 7.5L5 0.5 9.5 7.5z" fill="#8a8a8a"/></svg>
<svg style="left:243px;top:957px;" width="10" height="8" viewBox="0 0 10 8"><path d="M0.5 0.5L5 7.5 9.5 0.5z" fill="#8a8a8a"/></svg>
<div class="a" style="left:239px;top:814px;width:18px;height:142px;background:linear-gradient(90deg,#3a3a3a,#222);border-radius:7px"></div>
<div class="a" style="left:240px;top:843px;width:16px;height:93px;background:#626262;border-radius:6px"></div>
<div class="a" style="left:42px;top:968px;width:216px;height:35px;background:#232323;border:1px solid #303030"></div>
<div class="b" style="left:46px;top:972px;width:27px;height:27px;background:#474747;border-color:#555"></div>
<div class="b" style="left:77px;top:972px;width:27px;height:27px;background:#474747;border-color:#555"></div>
<div class="b" style="left:108px;top:972px;width:34px;height:27px;background:#474747;border-color:#555"></div>
<div class="b" style="left:146px;top:972px;width:27px;height:27px;background:#474747;border-color:#555"></div>
<div class="b" style="left:177px;top:972px;width:27px;height:27px;background:#474747;border-color:#555"></div>
<div class="b" style="left:208px;top:972px;width:27px;height:27px;background:#474747;border-color:#555"></div>
<div class="a" style="left:244px;top:972px;width:11px;height:27px;background:#444;border-radius:3px"></div>
<svg style="left:46px;top:972px;" width="27" height="27" viewBox="0 0 27 27"><path d="M7 17a4 4 0 0 1 0-8 6 6 0 0 1 12-1 4 4 0 0 1 1 9z" fill="#e0e0e0"/><path d="M11 12h5v6h3l-5.5 5-5.5-5h3z" fill="#e0e0e0" stroke="#474747" stroke-width="1"/></svg>
<svg style="left:77px;top:972px;" width="27" height="27" viewBox="0 0 27 27"><path d="M7.5 5.5h8l4.5 4.5v12.5h-12.5z" fill="none" stroke="#e0e0e0" stroke-width="1.5"/></svg>
<svg style="left:108px;top:972px;" width="34" height="27" viewBox="0 0 34 27"><path d="M5.5 5.5h8l4 4v13h-12z" fill="none" stroke="#e0e0e0" stroke-width="1.4"/><rect x="8" y="13" width="4" height="4" fill="#e0e0e0"/><rect x="12" y="17" width="4" height="4" fill="#e0e0e0"/><path d="M22 13h7l-3.5 4z" fill="#e0e0e0"/></svg>
<svg style="left:146px;top:972px;" width="27" height="27" viewBox="0 0 27 27"><path d="M7.5 5.5h8l4.5 4.5v12.5h-12.5z" fill="none" stroke="#e0e0e0" stroke-width="1.5"/><text x="13.5" y="19" font-size="10" font-weight="bold" text-anchor="middle" fill="#e0e0e0" font-family="Liberation Sans">S</text></svg>
<svg style="left:177px;top:972px;" width="27" height="27" viewBox="0 0 27 27"><path d="M5 8h6l2 2h9v11H5z" fill="#e0e0e0"/></svg>
<svg style="left:208px;top:972px;" width="27" height="27" viewBox="0 0 27 27"><rect x="5.5" y="10.5" width="11" height="11" fill="none" stroke="#e0e0e0" stroke-width="1.5"/><path d="M9.5 10.5v-4h11v11h-4" fill="none" stroke="#e0e0e0" stroke-width="1.5"/></svg>
<div class="a" style="left:1545px;top:91px;width:375px;height:913px;background:#252525"></div>
<div class="a" style="left:1918px;top:91px;width:2px;height:913px;background:#1c1c1c"></div>
<div class="a" style="left:1545px;top:90px;width:373px;height:1px;background:#2a2a2a"></div>
<div class="a" style="left:1545px;top:91px;width:373px;height:1.5px;background:#5aa0dc"></div>
<div class="a" style="left:1545px;top:92px;width:373px;height:21px;background:#3a3939"></div>
<div class="t" style="left:1545px;top:97.5px;width:341px;text-align:center;font-size:12.6px;color:#d2d2d2">Навигатор</div>
<svg style="left:1887px;top:96px;" width="12" height="12" viewBox="0 0 12 12"><path d="M1.5 3.5v7.5h7.5V7" fill="none" stroke="#c4c4c4" stroke-width="1.4"/><path d="M5 7.5l5.5-5.5M7 1.5h4v4" fill="none" stroke="#c4c4c4" stroke-width="1.6"/></svg>
<svg style="left:1904px;top:96.5px;" width="10" height="10" viewBox="0 0 10 10"><path d="M1.5 1.5l7 7M8.5 1.5l-7 7" stroke="#c8c8c8" stroke-width="2.6"/></svg>
<div class="a" style="left:1545px;top:114px;width:373px;height:34px;background:#1f1f1f"></div>
<div class="b" style="left:1549px;top:118px;width:27px;height:26px;background:#474747;border-color:#565656"></div>
<div class="b" style="left:1587px;top:118px;width:27px;height:26px;background:#474747;border-color:#565656"></div>
<div class="b" style="left:1618px;top:118px;width:27px;height:26px;background:#474747;border-color:#565656"></div>
<div class="b" style="left:1649px;top:118px;width:27px;height:26px;background:#474747;border-color:#565656"></div>
<div class="b" style="left:1687px;top:118px;width:27px;height:26px;background:#474747;border-color:#565656"></div>
<div class="b" style="left:1749px;top:118px;width:27px;height:26px;background:#474747;border-color:#565656"></div>
<div class="b" style="left:1787px;top:118px;width:27px;height:26px;background:#474747;border-color:#565656"></div>
<div class="b" style="left:1718px;top:118px;width:27px;height:26px;background:#262626;border-color:#5a5a5a"></div>
<div class="a" style="left:1581px;top:125px;width:1px;height:12px;background:#5a6878"></div>
<div class="a" style="left:1681px;top:125px;width:1px;height:12px;background:#5a6878"></div>
<div class="a" style="left:1781px;top:125px;width:1px;height:12px;background:#5a6878"></div>
<svg style="left:1549px;top:118px;" width="27" height="26" viewBox="0 0 27 26"><circle cx="11" cy="11" r="7" fill="none" stroke="#e0e0e0" stroke-width="1.8"/><path d="M16 16l5 5" stroke="#e0e0e0" stroke-width="2.6"/><text x="11" y="15" font-size="10" font-weight="bold" text-anchor="middle" fill="#e0e0e0" font-family="Liberation Sans">1</text></svg>
<svg style="left:1587px;top:118px;" width="27" height="26" viewBox="0 0 27 26"><circle cx="11" cy="11" r="7" fill="none" stroke="#e0e0e0" stroke-width="1.8"/><path d="M16 16l5 5" stroke="#e0e0e0" stroke-width="2.6"/><path d="M7 11h8M11 7v8" stroke="#e0e0e0" stroke-width="2"/></svg>
<svg style="left:1618px;top:118px;" width="27" height="26" viewBox="0 0 27 26"><rect x="5.5" y="5.5" width="16" height="15" fill="none" stroke="#e0e0e0" stroke-width="1.2"/><path d="M8 8l3 3M19 8l-3 3M8 18l3-3M19 18l-3-3" stroke="#e0e0e0" stroke-width="1.2"/></svg>
<svg style="left:1649px;top:118px;" width="27" height="26" viewBox="0 0 27 26"><circle cx="11" cy="11" r="7" fill="none" stroke="#e0e0e0" stroke-width="1.8"/><path d="M16 16l5 5" stroke="#e0e0e0" stroke-width="2.6"/><path d="M7 11h8" stroke="#e0e0e0" stroke-width="2"/></svg>
<svg style="left:1687px;top:118px;" width="27" height="26" viewBox="0 0 27 26"><circle cx="13.5" cy="14" r="8" fill="none" stroke="#e0e0e0" stroke-width="2"/><rect x="9" y="10" width="9" height="7" transform="rotate(-20 13.5 13.5)" fill="#e0e0e0"/><path d="M7 5l4 1-2 3z" fill="#e0e0e0"/></svg>
<svg style="left:1718px;top:118px;" width="27" height="26" viewBox="0 0 27 26"><rect x="7" y="7" width="13" height="12" fill="#e0e0e0"/><path d="M5 5h4M5 5v4M22 5h-4M22 5v4M5 21h4M5 21v-4M22 21h-4M22 21v-4" stroke="#e0e0e0" stroke-width="1.5"/></svg>
<svg style="left:1749px;top:118px;" width="27" height="26" viewBox="0 0 27 26"><circle cx="13.5" cy="14" r="8" fill="none" stroke="#e0e0e0" stroke-width="2"/><rect x="9" y="10" width="9" height="7" transform="rotate(20 13.5 13.5)" fill="#e0e0e0"/><path d="M20 5l-4 1 2 3z" fill="#e0e0e0"/></svg>
<svg style="left:1787px;top:118px;" width="27" height="26" viewBox="0 0 27 26"><rect x="4" y="11" width="7" height="10" fill="#e0e0e0"/><rect x="16" y="12" width="6" height="9" fill="none" stroke="#e0e0e0" stroke-width="1.5"/><path d="M13.5 9v14" stroke="#e0e0e0" stroke-width="1" stroke-dasharray="2 1"/><path d="M7 9c1-5 10-5 12 0" stroke="#e0e0e0" stroke-width="1.3" fill="none"/></svg>
<div class="a" style="left:1545px;top:148px;width:373px;height:154px;background:#4a4846"></div>
<div class="a" style="left:1599px;top:148px;width:242px;height:153px;border:2px solid #ff0000;border-top:none"></div>
<div class="a" style="left:1601px;top:148px;width:238px;height:150px;border:1px solid #9a9a9a;border-top:none"></div>
<div class="a" style="left:1630px;top:148px;width:205px;height:154px;background:#e8a5e0"></div>
<svg style="left:1630px;top:148px" width="205" height="154" viewBox="0 0 205 154"><g transform="scale(0.1935) translate(-426,-197)" opacity=".55"><use href="#fig"/></g></svg>
<div class="a" style="left:1545px;top:302px;width:373px;height:6px;background:repeating-linear-gradient(90deg,#212121 0 2px,#2a2a2a 2px 4px)"></div>
<div class="a" style="left:1545px;top:307px;width:373px;height:1px;background:#2a2a2a"></div>
<div class="a" style="left:1545px;top:308px;width:373px;height:1.5px;background:#5aa0dc"></div>
<div class="a" style="left:1545px;top:309px;width:373px;height:21px;background:#3a3939"></div>
<div class="t" style="left:1545px;top:314.5px;width:341px;text-align:center;font-size:11.8px;color:#d2d2d2">Слой</div>
<svg style="left:1887px;top:313px;" width="12" height="12" viewBox="0 0 12 12"><path d="M1.5 3.5v7.5h7.5V7" fill="none" stroke="#c4c4c4" stroke-width="1.4"/><path d="M5 7.5l5.5-5.5M7 1.5h4v4" fill="none" stroke="#c4c4c4" stroke-width="1.6"/></svg>
<svg style="left:1904px;top:313.5px;" width="10" height="10" viewBox="0 0 10 10"><path d="M1.5 1.5l7 7M8.5 1.5l-7 7" stroke="#c8c8c8" stroke-width="2.6"/></svg>
<div class="t" style="left:1551px;top:341.5px;font-size:12.6px;color:#e0e0e0;">Непрозрачность</div>
<div class="a" style="left:1654px;top:338px;width:211px;height:19px;background:linear-gradient(90deg,#8ccaf7,#5499d0);border:1px solid #3a70a8"></div>
<div class="t" style="left:1872px;top:341.5px;font-size:13px;color:#e0e0e0;">100 %</div>
<div class="t" style="left:1551px;top:370.5px;font-size:12.6px;color:#e0e0e0;">Наложение</div>
<div class="a" style="left:1647px;top:364px;width:266px;height:23px;background:#454545;border-radius:3px"></div>
<div class="t" style="left:1650px;top:370.5px;font-size:12.2px;color:#e0e0e0;">Нормальный</div>
<svg style="left:1898px;top:373px;" width="9" height="6" viewBox="0 0 9 6"><path d="M0 0h8l-4 5z" fill="#aaa"/></svg>
<svg style="left:1553px;top:400px;" width="12" height="12" viewBox="0 0 12 12"><rect x="1" y="1" width="10" height="10" fill="none" stroke="#ddd" stroke-width="1.2"/></svg>
<div class="t" style="left:1572px;top:400.5px;font-size:12.5px;color:#e0e0e0;">Альфа-канал</div>
<svg style="left:1676px;top:400px;" width="12" height="12" viewBox="0 0 12 12"><rect x="1" y="1" width="10" height="10" fill="none" stroke="#555" stroke-width="1.2"/></svg>
<div class="t" style="left:1694.5px;top:400.5px;font-size:12.5px;color:#777;">Вырезать</div>
<svg style="left:1800px;top:400px;" width="12" height="12" viewBox="0 0 12 12"><rect x="1" y="1" width="10" height="10" fill="none" stroke="#ddd" stroke-width="1.2"/></svg>
<div class="t" style="left:1818.5px;top:400.5px;font-size:12.7px;color:#e0e0e0;">Заблокировать</div>
<div class="a" style="left:1547px;top:421px;width:351px;height:162px;background:#3a3a3a"></div>
<div class="a" style="left:1547px;top:421px;width:351px;height:10px;background:#5c5c5c"></div>
<div class="a" style="left:1590px;top:421px;width:44px;height:3px;background:#f0f0f0"></div>
<div class="a" style="left:1547px;top:433px;width:351px;height:49px;background:#5c5c5c"></div>
<div class="a" style="left:1552px;top:451px;width:13px;height:13px;border-radius:50%;background:radial-gradient(#f0f0f0 40%,#bdbdbd 100%)"></div>
<div class="a" style="left:1589px;top:442px;width:45px;height:32px;background:conic-gradient(#e6e6e6 0 25%,#fafafa 0 50%,#e6e6e6 0 75%,#fafafa 0);background-size:12px 12px;border:1px solid #777"></div>
<div class="t" style="left:1654px;top:449.5px;font-size:15.2px;color:#f0f0f0;">Слой4</div>
<div class="a" style="left:1547px;top:483px;width:351px;height:49px;background:#5c5c5c"></div>
<div class="a" style="left:1552px;top:501px;width:13px;height:13px;border-radius:50%;background:radial-gradient(#f0f0f0 40%,#bdbdbd 100%)"></div>
<div class="a" style="left:1589px;top:492px;width:45px;height:32px;background:conic-gradient(#e6e6e6 0 25%,#fafafa 0 50%,#e6e6e6 0 75%,#fafafa 0);background-size:12px 12px;border:1px solid #777"></div>
<div class="t" style="left:1654px;top:499.5px;font-size:15.2px;color:#f0f0f0;">Слой3</div>
<div class="a" style="left:1547px;top:533px;width:351px;height:49px;background:#5c5c5c"></div>
<div class="a" style="left:1572px;top:533px;width:326px;height:49px;background:#5499d0"></div>
<div class="a" style="left:1552px;top:551px;width:13px;height:13px;border-radius:50%;background:radial-gradient(#f0f0f0 40%,#bdbdbd 100%)"></div>
<div class="a" style="left:1589px;top:542px;width:45px;height:32px;background:conic-gradient(#e6e6e6 0 25%,#fafafa 0 50%,#e6e6e6 0 75%,#fafafa 0);background-size:12px 12px;border:1px solid #777"></div>
<div class="t" style="left:1654px;top:549px;font-size:16px;color:#fff;font-weight:bold">Слой1</div>
<svg style="left:1871px;top:546px" width="24" height="24" viewBox="0 0 18 18"><g fill="#fff"><circle cx="9" cy="9" r="5.2"/><rect x="7.6" y="1" width="2.8" height="4" transform="rotate(0 9 9)"/><rect x="7.6" y="1" width="2.8" height="4" transform="rotate(45 9 9)"/><rect x="7.6" y="1" width="2.8" height="4" transform="rotate(90 9 9)"/><rect x="7.6" y="1" width="2.8" height="4" transform="rotate(135 9 9)"/><rect x="7.6" y="1" width="2.8" height="4" transform="rotate(180 9 9)"/><rect x="7.6" y="1" width="2.8" height="4" transform="rotate(225 9 9)"/><rect x="7.6" y="1" width="2.8" height="4" transform="rotate(270 9 9)"/><rect x="7.6" y="1" width="2.8" height="4" transform="rotate(315 9 9)"/></g><circle cx="9" cy="9" r="2" fill="#5499d0"/></svg>
<div class="a" style="left:1898px;top:421px;width:20px;height:162px;background:#252525"></div>
<svg style="left:1903px;top:423px;" width="10" height="8" viewBox="0 0 10 8"><path d="M0.5 7.5L5 0.5 9.5 7.5z" fill="#8a8a8a"/></svg>
<svg style="left:1903px;top:572px;" width="10" height="8" viewBox="0 0 10 8"><path d="M0.5 0.5L5 7.5 9.5 0.5z" fill="#8a8a8a"/></svg>
<div class="a" style="left:1899px;top:433px;width:18px;height:137px;background:linear-gradient(90deg,#3a3a3a,#222);border-radius:7px"></div>
<div class="a" style="left:1900px;top:459px;width:16px;height:106px;background:#646464;border-radius:6px"></div>
<div class="a" style="left:1547px;top:583px;width:371px;height:33px;background:#232323;border:1px solid #303030"></div>
<div class="b" style="left:1551px;top:587px;width:27px;height:26px;background:#474747;border-color:#555"></div>
<div class="b" style="left:1582px;top:587px;width:27px;height:26px;background:#474747;border-color:#555"></div>
<div class="b" style="left:1613px;top:587px;width:27px;height:26px;background:#474747;border-color:#555"></div>
<div class="b" style="left:1644px;top:587px;width:33px;height:26px;background:#474747;border-color:#555"></div>
<div class="b" style="left:1682px;top:587px;width:27px;height:26px;background:#474747;border-color:#555"></div>
<div class="b" style="left:1720px;top:587px;width:27px;height:26px;background:#474747;border-color:#555"></div>
<div class="b" style="left:1789px;top:587px;width:27px;height:26px;background:#474747;border-color:#555"></div>
<div class="b" style="left:1751px;top:587px;width:27px;height:26px;background:#262626;border-color:#5a5a5a"></div>
<div class="a" style="left:1714px;top:594px;width:1px;height:12px;background:#5a6878"></div>
<div class="a" style="left:1783px;top:594px;width:1px;height:12px;background:#5a6878"></div>
<svg style="left:1551px;top:587px;" width="27" height="26" viewBox="0 0 27 26"><path d="M7.5 5.5h8l4 4v12.5h-12z" fill="none" stroke="#e0e0e0" stroke-width="1.5"/></svg>
<svg style="left:1582px;top:587px;" width="27" height="26" viewBox="0 0 27 26"><path d="M7.5 5.5h8l4 4v12.5h-12z" fill="none" stroke="#e0e0e0" stroke-width="1.5"/><text x="13.5" y="19" font-size="10" text-anchor="middle" fill="#e0e0e0" font-family="Liberation Sans">8</text></svg>
<svg style="left:1613px;top:587px;" width="27" height="26" viewBox="0 0 27 26"><path d="M7.5 5.5h8l4 4v12.5h-12z" fill="none" stroke="#e0e0e0" stroke-width="1.5"/><text x="13.5" y="19" font-size="10" text-anchor="middle" fill="#e0e0e0" font-family="Liberation Sans">1</text></svg>
<svg style="left:1644px;top:587px;" width="33" height="26" viewBox="0 0 33 26"><path d="M5.5 5.5h8l4 4v4" fill="none" stroke="#e0e0e0" stroke-width="1.5"/><path d="M5.5 5.5v16h5" fill="none" stroke="#e0e0e0" stroke-width="1.5"/><path d="M14 15v8M10 19h8" stroke="#e0e0e0" stroke-width="2"/><path d="M22 16h7l-3.5 4z" fill="#e0e0e0"/></svg>
<svg style="left:1682px;top:587px;" width="27" height="26" viewBox="0 0 27 26"><path d="M5 8h6l2 2h9v11H5z" fill="#e0e0e0"/></svg>
<svg style="left:1720px;top:587px;" width="27" height="26" viewBox="0 0 27 26"><rect x="5.5" y="10.5" width="11" height="11" fill="none" stroke="#e0e0e0" stroke-width="1.5"/><path d="M9.5 10.5v-4h11v11h-4" fill="none" stroke="#e0e0e0" stroke-width="1.5"/></svg>
<svg style="left:1751px;top:587px;" width="27" height="26" viewBox="0 0 27 26"><path d="M5 5h6v7H5zM5 14h6v7H5z" fill="none" stroke="#e0e0e0" stroke-width="1.3"/><path d="M5 12l6-7M5 21l6-7" stroke="#e0e0e0" stroke-width="1"/><rect x="15" y="10" width="7" height="7" fill="#e0e0e0"/><path d="M11 13.5h4" stroke="#e0e0e0" stroke-width="1.5"/></svg>
<svg style="left:1789px;top:587px;" width="27" height="26" viewBox="0 0 27 26"><path d="M6 8h15M10 8V6h7v2" fill="none" stroke="#e0e0e0" stroke-width="1.6"/><path d="M7.5 9.5h12v12h-12z" fill="none" stroke="#e0e0e0" stroke-width="1.6"/><path d="M11 11v9M13.5 11v9M16 11v9" stroke="#e0e0e0" stroke-width="1.3"/></svg>
<div class="a" style="left:1545px;top:617px;width:373px;height:7px;background:repeating-linear-gradient(90deg,#212121 0 2px,#2a2a2a 2px 4px)"></div>
<div class="a" style="left:1545px;top:624px;width:373px;height:1px;background:#2a2a2a"></div>
<div class="a" style="left:1545px;top:625px;width:373px;height:1.5px;background:#5aa0dc"></div>
<div class="a" style="left:1545px;top:626px;width:373px;height:21px;background:#3a3939"></div>
<div class="t" style="left:1545px;top:631.5px;width:341px;text-align:center;font-size:12.4px;color:#d2d2d2">Размер кисти</div>
<svg style="left:1887px;top:630px;" width="12" height="12" viewBox="0 0 12 12"><path d="M1.5 3.5v7.5h7.5V7" fill="none" stroke="#c4c4c4" stroke-width="1.4"/><path d="M5 7.5l5.5-5.5M7 1.5h4v4" fill="none" stroke="#c4c4c4" stroke-width="1.6"/></svg>
<svg style="left:1904px;top:630.5px;" width="10" height="10" viewBox="0 0 10 10"><path d="M1.5 1.5l7 7M8.5 1.5l-7 7" stroke="#c8c8c8" stroke-width="2.6"/></svg>
<div class="a" style="left:1545px;top:648px;width:356px;height:356px;background:#484848"></div>
<div class="a" style="left:1546px;top:649px;width:48.5px;height:60px;background:#5c5c5c"></div>
<div class="a" style="left:1570px;top:673px;width:1px;height:1px;background:#bbb"></div>
<div class="t" style="left:1546px;top:696px;width:49px;text-align:center;font-size:12px;color:#f4f4f4;letter-spacing:1px;transform:scaleX(0.78)">1</div>
<div class="a" style="left:1596px;top:649px;width:48.5px;height:60px;background:#5c5c5c"></div>
<div class="a" style="left:1620px;top:673px;width:1px;height:1px;background:#bbb"></div>
<div class="t" style="left:1596px;top:696px;width:49px;text-align:center;font-size:12px;color:#f4f4f4;letter-spacing:1px;transform:scaleX(0.78)">1.5</div>
<div class="a" style="left:1646px;top:649px;width:48.5px;height:60px;background:#5c5c5c"></div>
<div class="a" style="left:1669.5px;top:673.0px;width:2px;height:2px;border-radius:50%;background:#efefef"></div>
<div class="t" style="left:1646px;top:696px;width:49px;text-align:center;font-size:12px;color:#f4f4f4;letter-spacing:1px;transform:scaleX(0.78)">2</div>
<div class="a" style="left:1696px;top:649px;width:48.5px;height:60px;background:#5c5c5c"></div>
<div class="a" style="left:1719.0px;top:672.5px;width:3px;height:3px;border-radius:50%;background:#efefef"></div>
<div class="t" style="left:1696px;top:696px;width:49px;text-align:center;font-size:12px;color:#f4f4f4;letter-spacing:1px;transform:scaleX(0.78)">3</div>
<div class="a" style="left:1746px;top:649px;width:48.5px;height:60px;background:#5c5c5c"></div>
<div class="a" style="left:1768.5px;top:672.0px;width:4px;height:4px;border-radius:50%;background:#efefef"></div>
<div class="t" style="left:1746px;top:696px;width:49px;text-align:center;font-size:12px;color:#f4f4f4;letter-spacing:1px;transform:scaleX(0.78)">4</div>
<div class="a" style="left:1796px;top:649px;width:48.5px;height:60px;background:#5c5c5c"></div>
<div class="a" style="left:1818.25px;top:671.75px;width:4.5px;height:4.5px;border-radius:50%;background:#efefef"></div>
<div class="t" style="left:1796px;top:696px;width:49px;text-align:center;font-size:12px;color:#f4f4f4;letter-spacing:1px;transform:scaleX(0.78)">5</div>
<div class="a" style="left:1846px;top:649px;width:48.5px;height:60px;background:#5c5c5c"></div>
<div class="a" style="left:1867.5px;top:671.0px;width:6px;height:6px;border-radius:50%;background:#efefef"></div>
<div class="t" style="left:1846px;top:696px;width:49px;text-align:center;font-size:12px;color:#f4f4f4;letter-spacing:1px;transform:scaleX(0.78)">7</div>
<div class="a" style="left:1896px;top:649px;width:4px;height:60px;background:#5c5c5c"></div>
<div class="a" style="left:1546px;top:711px;width:48.5px;height:60px;background:#5c5c5c"></div>
<div class="a" style="left:1564.25px;top:729.75px;width:12.5px;height:12.5px;border-radius:50%;background:#efefef"></div>
<div class="t" style="left:1546px;top:758px;width:49px;text-align:center;font-size:12px;color:#f4f4f4;letter-spacing:1px;transform:scaleX(0.78)">12</div>
<div class="a" style="left:1596px;top:711px;width:48.5px;height:60px;background:#5c5c5c"></div>
<div class="a" style="left:1613.0px;top:728.5px;width:15px;height:15px;border-radius:50%;background:#efefef"></div>
<div class="t" style="left:1596px;top:758px;width:49px;text-align:center;font-size:12px;color:#f4f4f4;letter-spacing:1px;transform:scaleX(0.78)">15</div>
<div class="a" style="left:1646px;top:711px;width:48.5px;height:60px;background:#5c5c5c"></div>
<div class="a" style="left:1660.5px;top:726.0px;width:20px;height:20px;border-radius:50%;background:#efefef"></div>
<div class="t" style="left:1646px;top:758px;width:49px;text-align:center;font-size:12px;color:#f4f4f4;letter-spacing:1px;transform:scaleX(0.78)">20</div>
<div class="a" style="left:1696px;top:711px;width:48.5px;height:60px;background:#5c5c5c"></div>
<div class="a" style="left:1708.25px;top:723.75px;width:24.5px;height:24.5px;border-radius:50%;background:#efefef"></div>
<div class="t" style="left:1696px;top:758px;width:49px;text-align:center;font-size:12px;color:#f4f4f4;letter-spacing:1px;transform:scaleX(0.78)">25</div>
<div class="a" style="left:1746px;top:711px;width:48.5px;height:60px;background:#5c5c5c"></div>
<div class="a" style="left:1755.5px;top:721.0px;width:30px;height:30px;border-radius:50%;background:#efefef"></div>
<div class="t" style="left:1746px;top:758px;width:49px;text-align:center;font-size:12px;color:#f4f4f4;letter-spacing:1px;transform:scaleX(0.78)">30</div>
<div class="a" style="left:1796px;top:711px;width:48.5px;height:60px;background:#5c5c5c"></div>
<div class="a" style="left:1805.5px;top:721.0px;width:30px;height:30px;border-radius:50%;background:#efefef"></div>
<div class="t" style="left:1796px;top:758px;width:49px;text-align:center;font-size:12px;color:#f4f4f4;letter-spacing:1px;transform:scaleX(0.78)">40</div>
<div class="a" style="left:1846px;top:711px;width:48.5px;height:60px;background:#5c5c5c"></div>
<div class="a" style="left:1855.5px;top:721.0px;width:30px;height:30px;border-radius:50%;background:#efefef"></div>
<div class="t" style="left:1846px;top:758px;width:49px;text-align:center;font-size:12px;color:#f4f4f4;letter-spacing:1px;transform:scaleX(0.78)">50</div>
<div class="a" style="left:1896px;top:711px;width:4px;height:60px;background:#5c5c5c"></div>
<div class="a" style="left:1546px;top:773px;width:48.5px;height:60px;background:#5c5c5c"></div>
<div class="a" style="left:1555.5px;top:783.0px;width:30px;height:30px;border-radius:50%;background:#efefef"></div>
<div class="t" style="left:1546px;top:820px;width:49px;text-align:center;font-size:12px;color:#f4f4f4;letter-spacing:1px;transform:scaleX(0.78)">100</div>
<div class="a" style="left:1596px;top:773px;width:48.5px;height:60px;background:#5c5c5c"></div>
<div class="a" style="left:1605.5px;top:783.0px;width:30px;height:30px;border-radius:50%;background:#efefef"></div>
<div class="t" style="left:1596px;top:820px;width:49px;text-align:center;font-size:12px;color:#f4f4f4;letter-spacing:1px;transform:scaleX(0.78)">150</div>
<div class="a" style="left:1646px;top:773px;width:48.5px;height:60px;background:#5c5c5c"></div>
<div class="a" style="left:1655.5px;top:783.0px;width:30px;height:30px;border-radius:50%;background:#efefef"></div>
<div class="t" style="left:1646px;top:820px;width:49px;text-align:center;font-size:12px;color:#f4f4f4;letter-spacing:1px;transform:scaleX(0.78)">200</div>
<div class="a" style="left:1696px;top:773px;width:48.5px;height:60px;background:#5c5c5c"></div>
<div class="a" style="left:1705.5px;top:783.0px;width:30px;height:30px;border-radius:50%;background:#efefef"></div>
<div class="t" style="left:1696px;top:820px;width:49px;text-align:center;font-size:12px;color:#f4f4f4;letter-spacing:1px;transform:scaleX(0.78)">300</div>
<div class="a" style="left:1746px;top:773px;width:48.5px;height:60px;background:#5c5c5c"></div>
<div class="a" style="left:1755.5px;top:783.0px;width:30px;height:30px;border-radius:50%;background:#efefef"></div>
<div class="t" style="left:1746px;top:820px;width:49px;text-align:center;font-size:12px;color:#f4f4f4;letter-spacing:1px;transform:scaleX(0.78)">400</div>
<div class="a" style="left:1796px;top:773px;width:48.5px;height:60px;background:#5c5c5c"></div>
<div class="a" style="left:1805.5px;top:783.0px;width:30px;height:30px;border-radius:50%;background:#efefef"></div>
<div class="t" style="left:1796px;top:820px;width:49px;text-align:center;font-size:12px;color:#f4f4f4;letter-spacing:1px;transform:scaleX(0.78)">500</div>
<div class="a" style="left:1846px;top:773px;width:48.5px;height:60px;background:#5c5c5c"></div>
<div class="a" style="left:1855.5px;top:783.0px;width:30px;height:30px;border-radius:50%;background:#efefef"></div>
<div class="t" style="left:1846px;top:820px;width:49px;text-align:center;font-size:12px;color:#f4f4f4;letter-spacing:1px;transform:scaleX(0.78)">700</div>
<div class="a" style="left:1896px;top:773px;width:4px;height:60px;background:#5c5c5c"></div>
<div class="a" style="left:1901px;top:648px;width:17px;height:356px;background:#252525"></div>
<svg style="left:1905px;top:651px;" width="10" height="8" viewBox="0 0 10 8"><path d="M0.5 7.5L5 0.5 9.5 7.5z" fill="#8a8a8a"/></svg>
<div class="a" style="left:1902px;top:660px;width:16px;height:340px;background:linear-gradient(90deg,#606060,#4a4a4a);border-radius:7px"></div>
<svg style="left:0;top:0" width="1920" height="1080" viewBox="0 0 1920 1080"><defs><filter id="bl" x="-50%" y="-50%" width="200%" height="200%"><feGaussianBlur stdDeviation="4"/></filter><filter id="bl2" x="-50%" y="-50%" width="200%" height="200%"><feGaussianBlur stdDeviation="1.6"/></filter><clipPath id="cv"><rect x="426" y="197" width="1060" height="787"/></clipPath></defs><g clip-path="url(#cv)"><g id="fig"><ellipse cx="827" cy="251" rx="24" ry="40" fill="#f5dac8" opacity=".55" filter="url(#bl2)"/><ellipse cx="823" cy="262" rx="13" ry="24" fill="#f0cdb6" opacity=".35" filter="url(#bl2)"/><ellipse cx="840" cy="270" rx="6" ry="10" fill="#ecd286" opacity=".6" filter="url(#bl2)"/><ellipse cx="852" cy="272" rx="6" ry="24" fill="#f3e4b4" opacity=".55" filter="url(#bl2)"/><ellipse cx="838" cy="300" rx="6" ry="12" fill="#f4e6bc" opacity=".55" filter="url(#bl2)"/><ellipse cx="910" cy="338" rx="46" ry="19" fill="#f2dcb2" opacity=".65" filter="url(#bl2)"/><ellipse cx="890" cy="360" rx="42" ry="11" fill="#f3e2d6" opacity=".5" filter="url(#bl2)"/><path d="M888.0 203.5 C893.2 201.1 899.5 200.5 906.0 200.5 C912.5 200.5 920.5 200.5 927.0 203.3 C933.5 206.1 940.6 211.6 945.0 217.2 C949.4 222.8 951.7 231.1 953.3 236.7 C954.9 242.3 954.2 241.3 954.7 250.6 C955.2 259.9 954.9 284.3 956.1 292.2 C957.3 300.1 958.5 295.5 961.7 297.8 C965.0 300.1 975.6 303.7 975.6 306.1 C975.6 308.5 966.6 309.7 962.0 312.0 C957.4 314.3 952.3 320.0 947.8 320.0 C943.3 320.0 938.0 315.9 935.0 312.0 C932.0 308.1 929.7 301.6 929.7 296.4 C929.8 291.2 933.4 287.9 935.3 281.0 C937.1 274.1 941.0 260.4 940.8 254.7 C940.6 249.0 938.5 248.4 933.9 247.0 C929.3 245.6 917.9 247.4 913.0 246.4 C908.1 245.4 906.5 244.5 904.7 240.8 C902.9 237.1 903.1 225.5 902.0 224.0 C900.9 222.5 898.5 228.5 897.8 232.0 C897.1 235.5 900.6 242.4 897.8 245.0 C895.0 247.6 884.2 247.3 881.0 247.8 C877.8 248.3 879.0 245.0 878.3 247.8 C877.6 250.6 876.5 258.9 877.0 264.4 C877.5 269.9 878.5 275.7 881.0 281.0 C883.5 286.3 889.0 292.4 892.2 296.4 C895.5 300.3 898.9 301.2 900.5 304.7 C902.1 308.2 904.8 313.0 902.0 317.2 C899.2 321.4 889.8 325.8 884.0 329.7 C878.2 333.6 870.5 347.1 867.2 340.8 C863.9 334.6 864.6 307.2 864.4 292.2 C864.2 277.2 865.2 260.6 865.8 250.6 C866.4 240.6 866.5 237.9 868.0 232.0 C869.5 226.1 871.7 219.8 875.0 215.0 C878.3 210.2 882.8 205.9 888.0 203.5Z" fill="#b9efc6" opacity="0.88"/><path d="M878.3 247.8 C881.8 244.6 894.0 248.3 897.8 245.0 C901.6 241.7 900.3 231.8 901.0 228.0 C901.7 224.2 901.7 222.0 902.0 222.0 C902.3 222.0 902.5 224.9 903.0 228.0 C903.5 231.1 903.0 237.7 904.7 240.8 C906.4 243.9 908.1 245.4 913.0 246.4 C917.9 247.4 929.3 245.6 933.9 247.0 C938.5 248.4 939.4 252.5 940.8 254.7 C942.2 256.9 942.7 257.8 942.2 260.3 C941.7 262.9 939.1 266.6 938.0 270.0 C936.9 273.4 936.9 276.8 935.3 281.0 C933.7 285.2 931.3 291.3 928.3 295.0 C925.3 298.7 921.1 301.7 917.2 303.3 C913.3 304.9 908.9 305.9 904.7 304.7 C900.5 303.5 896.2 300.3 892.2 296.4 C888.2 292.4 883.5 286.3 881.0 281.0 C878.5 275.7 877.5 269.9 877.0 264.4 C876.5 258.9 874.8 251.0 878.3 247.8Z" fill="#f0dbb4" opacity="0.93"/><path d="M900.5 304.7 C903.0 302.4 912.3 304.7 917.2 303.3 C922.1 301.9 927.4 295.2 929.7 296.4 C932.0 297.6 928.0 306.4 931.0 310.3 C934.0 314.2 948.0 316.4 947.8 320.0 C947.6 323.6 937.1 329.3 930.0 332.0 C922.9 334.7 912.7 336.4 905.0 336.0 C897.3 335.6 884.5 332.8 884.0 329.7 C883.5 326.6 899.2 321.4 902.0 317.2 C904.8 313.0 898.0 307.0 900.5 304.7Z" fill="#efd8b2" opacity="0.9"/><path d="M882.5 256C886 252 892 252 896.4 254.7 892 258 886 258.5 882.5 256z" fill="#fff" opacity="1"/><path d="M913 254.7C917 251 924 251 928.3 253.3 924 256.5 917 257 913 254.7z" fill="#fff" opacity="1"/><path d="M888.3 254.2a2.5 2 0 1 0 5 0a2.5 2 0 1 0-5 0z" fill="#d480d4" opacity="1"/><path d="M917.5 253.5a2.5 2 0 1 0 5 0a2.5 2 0 1 0-5 0z" fill="#d480d4" opacity="1"/><path d="M896.4 286.7C899 283 902 281.5 904.7 282.5 907 281.5 911 283 914.4 286.7 911 291 908 293.6 905 293.6 901 293 898 290 896.4 286.7z" fill="#cc6aa8" opacity="0.95"/><path d="M804 244L814 230M808 247L818 233M811 244L820 232" fill="none" stroke="#8ee08a" stroke-width="1.8" stroke-linecap="round" stroke-linejoin="round" opacity="0.55"/><path d="M829 230L833 248M834 232L831 247M826 238L839 242" fill="none" stroke="#e8a0d8" stroke-width="1.6" stroke-linecap="round" stroke-linejoin="round" opacity="0.55"/><path d="M853 236L856 244" fill="none" stroke="#e8b0e0" stroke-width="1.6" stroke-linecap="round" stroke-linejoin="round" opacity="0.5"/><path d="M867.2 340.8 C866.7 332.7 864.6 307.2 864.4 292.2 C864.2 277.2 865.2 260.6 865.8 250.6 C866.4 240.6 866.5 237.9 868.0 232.0 C869.5 226.1 871.7 219.8 875.0 215.0 C878.3 210.2 882.8 205.9 888.0 203.5 C893.2 201.1 899.5 200.5 906.0 200.5 C912.5 200.5 920.5 200.5 927.0 203.3 C933.5 206.1 940.6 211.6 945.0 217.2 C949.4 222.8 951.7 231.1 953.3 236.7 C954.9 242.3 954.2 241.3 954.7 250.6 C955.2 259.9 954.9 284.3 956.1 292.2 C957.3 300.1 958.5 295.5 961.7 297.8 C965.0 300.1 973.3 304.7 975.6 306.1" fill="none" stroke="#333" stroke-width="1.0" stroke-linecap="round" stroke-linejoin="round" opacity="1"/><path d="M907.5 203.3 C906.6 205.9 902.9 216.1 902.0 218.6" fill="none" stroke="#555" stroke-width="0.7" stroke-linecap="round" stroke-linejoin="round" opacity="1"/><path d="M878.3 247.8 C878.1 250.6 876.5 258.9 877.0 264.4 C877.5 269.9 878.5 275.7 881.0 281.0 C883.5 286.3 888.2 292.4 892.2 296.4 C896.2 300.3 900.5 303.5 904.7 304.7 C908.9 305.9 913.3 304.9 917.2 303.3 C921.1 301.7 925.3 298.7 928.3 295.0 C931.3 291.3 933.7 285.2 935.3 281.0 C936.9 276.8 936.9 273.4 938.0 270.0 C939.1 266.6 941.7 262.9 942.2 260.3 C942.7 257.8 941.0 255.6 940.8 254.7" fill="none" stroke="#555" stroke-width="0.8" stroke-linecap="round" stroke-linejoin="round" opacity="1"/><path d="M939.4 274.2a5.5 5.5 0 1 1-0.1 0" fill="none" stroke="#444" stroke-width="0.8" stroke-linecap="round" stroke-linejoin="round" opacity="1"/><path d="M900.5 304.7 C900.8 306.8 904.8 313.0 902.0 317.2 C899.2 321.4 889.8 325.8 884.0 329.7 C878.2 333.6 872.0 337.7 867.2 340.8 C862.4 343.9 858.7 345.7 855.0 348.3 C851.3 350.9 847.5 353.6 845.0 356.7 C842.5 359.8 841.0 362.3 840.0 366.7 C839.0 371.1 839.0 373.9 838.7 383.3 C838.4 392.7 838.4 416.6 838.3 423.3" fill="none" stroke="#2a2a2a" stroke-width="1.1" stroke-linecap="round" stroke-linejoin="round" opacity="1"/><path d="M929.7 296.4 C929.9 298.7 928.0 306.4 931.0 310.3 C934.0 314.2 945.0 318.4 947.8 320.0" fill="none" stroke="#444" stroke-width="0.8" stroke-linecap="round" stroke-linejoin="round" opacity="1"/><path d="M902 338C908 333 915 332 923 339M929 330C935 326 942 324 946 323" fill="none" stroke="#333" stroke-width="0.7" stroke-linecap="round" stroke-linejoin="round" opacity="1"/><path d="M882.5 256C886 252 892 252 896.4 254.7M913 254.7C917 251 924 251 928.3 253.3" fill="none" stroke="#333" stroke-width="0.7" stroke-linecap="round" stroke-linejoin="round" opacity="1"/><path d="M900.5 260.3C898 266 896 271 896.4 274.2 898 276 900 275.5 900.5 275.5M913 272.8C912 275 910 276 908 275.5" fill="none" stroke="#9a8070" stroke-width="0.6" stroke-linecap="round" stroke-linejoin="round" opacity="1"/><path d="M896.4 286.7C902 288 909 288 914.4 286.7" fill="none" stroke="#702858" stroke-width="0.6" stroke-linecap="round" stroke-linejoin="round" opacity="1"/><path d="M896.4 286.7C899 283 902 281.5 904.7 282.5 907 281.5 911 283 914.4 286.7 911 291 908 293.6 905 293.6 901 293 898 290 896.4 286.7z" fill="none" stroke="#704060" stroke-width="0.6" stroke-linecap="round" stroke-linejoin="round" opacity="1"/><path d="M838.3 423.3 C840.2 424.0 845.8 425.0 850.0 427.5 C854.2 430.0 859.4 434.0 863.3 438.3 C867.2 442.6 870.5 448.6 873.3 453.3 C876.1 458.0 877.9 462.8 880.0 466.7 C882.1 470.6 884.3 474.4 886.0 477.0 C887.7 479.6 889.3 481.2 890.0 482.0" fill="none" stroke="#2a2a2a" stroke-width="1.0" stroke-linecap="round" stroke-linejoin="round" opacity="1"/><path d="M838.3 423.3 C836.9 425.0 832.2 429.7 830.0 433.3 C827.8 436.9 826.1 440.2 825.0 445.0 C823.9 449.8 824.4 455.7 823.4 462.0 C822.4 468.3 820.2 474.5 819.2 482.9 C818.2 491.3 817.1 504.5 817.1 512.2 C817.1 519.9 817.3 525.3 819.2 529.0 C821.1 532.7 825.1 532.6 828.6 534.2 C832.1 535.8 836.6 541.0 840.1 538.4 C843.6 535.8 847.9 521.8 849.5 518.5" fill="none" stroke="#2a2a2a" stroke-width="1.1" stroke-linecap="round" stroke-linejoin="round" opacity="1"/><path d="M830.0 447.5 C832.5 447.3 840.0 446.1 845.0 446.5 C850.0 446.9 857.5 449.4 860.0 450.0" fill="none" stroke="#2a2a2a" stroke-width="0.8" stroke-linecap="round" stroke-linejoin="round" opacity="1"/><path d="M833.3 454.0 C835.2 454.7 841.7 456.0 845.0 458.0 C848.3 460.0 851.9 464.5 853.3 465.8" fill="none" stroke="#2a2a2a" stroke-width="0.8" stroke-linecap="round" stroke-linejoin="round" opacity="1"/><path d="M827.6 470.4 C829.0 469.9 833.1 467.8 835.9 467.2 C838.7 466.6 842.9 466.8 844.3 466.7" fill="none" stroke="#2a2a2a" stroke-width="0.8" stroke-linecap="round" stroke-linejoin="round" opacity="1"/><path d="M885.0 329.0 C885.3 332.5 885.7 341.5 886.7 350.0 C887.7 358.5 890.1 375.0 890.8 380.0" fill="none" stroke="#2a2a2a" stroke-width="0.9" stroke-linecap="round" stroke-linejoin="round" opacity="1"/><path d="M890.8 380.0 C889.0 382.8 883.2 392.0 880.0 396.7 C876.8 401.4 873.0 405.0 871.7 408.3 C870.5 411.6 871.8 412.8 872.5 416.7 C873.2 420.6 874.8 426.1 875.8 431.7 C876.8 437.2 877.6 444.7 878.3 450.0 C879.0 455.3 879.7 461.1 880.0 463.3" fill="none" stroke="#2a2a2a" stroke-width="0.9" stroke-linecap="round" stroke-linejoin="round" opacity="1"/><path d="M868.3 376.7 C868.2 380.6 868.0 390.0 868.0 400.0 C868.0 410.0 868.2 430.6 868.3 436.7" fill="none" stroke="#2a2a2a" stroke-width="0.8" stroke-linecap="round" stroke-linejoin="round" opacity="1"/><path d="M890.8 380.0 C892.9 382.8 897.9 392.0 903.3 396.7 C908.7 401.4 920.0 406.4 923.3 408.3" fill="none" stroke="#2a2a2a" stroke-width="0.9" stroke-linecap="round" stroke-linejoin="round" opacity="1"/><path d="M923.3 408.3 C924.7 406.6 927.8 401.9 931.7 398.3 C935.6 394.7 943.1 390.9 946.7 386.7 C950.3 382.5 952.2 375.5 953.3 373.3" fill="none" stroke="#2a2a2a" stroke-width="0.9" stroke-linecap="round" stroke-linejoin="round" opacity="1"/><path d="M875.8 432.5 C879.8 432.4 893.2 432.9 900.0 431.7 C906.8 430.4 912.8 427.5 916.7 425.0 C920.6 422.5 922.2 418.1 923.3 416.7" fill="none" stroke="#2a2a2a" stroke-width="0.9" stroke-linecap="round" stroke-linejoin="round" opacity="1"/><path d="M923.3 416.7 C925.0 418.1 928.3 423.1 933.3 425.0 C938.3 426.9 950.0 427.8 953.3 428.3" fill="none" stroke="#2a2a2a" stroke-width="0.9" stroke-linecap="round" stroke-linejoin="round" opacity="1"/><path d="M915 433.3L928.3 440 916.7 453.3 928.3 460 918.3 470 926.7 480 919 488 925 494M926.7 431.7L915 441.7 926.7 451.7 916.7 460 926.7 468.3 918 478" fill="none" stroke="#222" stroke-width="0.8" stroke-linecap="round" stroke-linejoin="round" opacity="1"/><path d="M950.4 319.8 C950.3 324.8 949.2 341.4 950.0 350.0 C950.8 358.6 953.8 365.6 955.0 371.7 C956.2 377.8 957.8 377.5 957.5 386.7 C957.2 395.9 954.7 413.4 953.3 426.7 C951.9 440.0 950.2 457.8 949.2 466.7 C948.2 475.6 948.0 474.9 947.5 480.0 C947.0 485.1 946.7 494.2 946.5 497.0" fill="none" stroke="#2a2a2a" stroke-width="1.0" stroke-linecap="round" stroke-linejoin="round" opacity="1"/><path d="M958.5 328.0 C959.6 333.6 962.1 349.7 965.0 361.7 C967.9 373.7 975.5 390.8 975.8 400.0 C976.1 409.2 968.6 411.4 966.7 416.7 C964.8 422.0 964.6 429.2 964.2 431.7" fill="none" stroke="#2a2a2a" stroke-width="0.9" stroke-linecap="round" stroke-linejoin="round" opacity="1"/><path d="M965.0 420.0 C967.0 419.2 974.8 411.9 976.7 415.0 C978.7 418.1 978.7 429.7 976.7 438.3 C974.8 446.9 967.8 459.8 965.0 466.7 C962.2 473.6 960.8 477.8 960.0 480.0" fill="none" stroke="#2a2a2a" stroke-width="0.9" stroke-linecap="round" stroke-linejoin="round" opacity="1"/><path d="M989.4 313.3 C989.2 318.9 987.6 333.4 988.3 346.7 C988.9 360.0 991.3 379.1 993.3 393.3 C995.2 407.5 999.7 419.5 1000.0 431.7 C1000.3 443.9 995.8 460.9 995.0 466.7" fill="none" stroke="#2a2a2a" stroke-width="0.9" stroke-linecap="round" stroke-linejoin="round" opacity="1"/><path d="M966.7 308.5 C972.5 308.5 993.7 307.1 1001.7 308.5 C1009.8 309.9 1011.4 310.9 1015.0 316.7 C1018.6 322.5 1021.1 332.2 1023.3 343.3 C1025.5 354.4 1026.3 368.9 1028.3 383.3 C1030.2 397.8 1033.1 415.2 1035.0 430.0 C1036.9 444.8 1039.8 461.2 1039.8 472.0 C1039.8 482.8 1037.5 488.9 1035.2 495.0 C1032.9 501.1 1029.4 504.8 1026.0 508.6 C1022.6 512.4 1019.7 515.1 1014.8 517.7 C1009.9 520.4 1001.6 523.8 996.7 524.5 C991.8 525.2 987.3 522.4 985.4 522.0" fill="none" stroke="#2a2a2a" stroke-width="1.1" stroke-linecap="round" stroke-linejoin="round" opacity="1"/><path d="M1026.0 442.9 C1025.7 445.5 1025.9 453.8 1024.0 458.7 C1022.1 463.6 1019.0 468.1 1014.8 472.3 C1010.6 476.5 1001.6 481.8 999.0 483.7" fill="none" stroke="#2a2a2a" stroke-width="0.8" stroke-linecap="round" stroke-linejoin="round" opacity="1"/><path d="M1025.0 466.7 C1022.3 470.9 1011.7 487.5 1009.0 491.6" fill="none" stroke="#2a2a2a" stroke-width="0.8" stroke-linecap="round" stroke-linejoin="round" opacity="1"/><path d="M1005.8 461.0 C1003.9 461.8 997.8 462.5 994.4 465.5 C991.0 468.5 989.2 474.1 985.4 479.0 C981.6 483.9 974.0 492.3 971.7 495.0" fill="none" stroke="#2a2a2a" stroke-width="0.9" stroke-linecap="round" stroke-linejoin="round" opacity="1"/><path d="M985.4 517.7 C987.7 516.9 994.1 514.5 999.0 513.0 C1003.9 511.5 1012.2 509.3 1014.8 508.6" fill="none" stroke="#2a2a2a" stroke-width="0.8" stroke-linecap="round" stroke-linejoin="round" opacity="1"/><path d="M844.3 503.3 C843.2 503.2 840.1 503.6 838.0 502.8 C835.9 502.0 832.9 501.0 831.7 498.6 C830.5 496.2 830.5 491.9 830.7 488.2 C830.9 484.5 831.6 478.9 832.8 476.7 C834.0 474.5 835.4 475.1 838.0 475.1 C840.6 475.1 844.3 475.6 848.5 476.7 C852.7 477.8 860.7 480.6 863.1 481.4" fill="none" stroke="#2a2a2a" stroke-width="1.0" stroke-linecap="round" stroke-linejoin="round" opacity="1"/><path d="M846.4 486.0 C845.9 487.2 843.6 490.5 843.3 493.4 C842.9 496.3 844.1 501.6 844.3 503.3" fill="none" stroke="#2a2a2a" stroke-width="0.9" stroke-linecap="round" stroke-linejoin="round" opacity="1"/><path d="M846.4 486.0 C847.5 485.5 849.9 483.6 852.7 482.9 C855.5 482.2 859.6 482.0 863.1 481.9 C866.6 481.8 868.0 482.3 873.6 482.4 C879.2 482.5 891.5 481.6 896.6 482.4 C901.7 483.2 901.2 485.5 904.0 487.1 C906.8 488.8 911.8 491.0 913.4 492.3 C915.0 493.6 914.9 494.6 913.9 495.0 C912.9 495.4 910.1 494.8 907.1 494.4 C904.1 493.9 898.9 492.6 895.6 492.3 C892.3 492.1 889.0 492.0 887.2 492.9 C885.4 493.8 884.4 496.0 884.6 497.6 C884.8 499.2 887.7 501.5 888.3 502.3" fill="none" stroke="#2a2a2a" stroke-width="1.0" stroke-linecap="round" stroke-linejoin="round" opacity="1"/><path d="M844.3 503.3 C845.2 503.8 847.0 503.1 849.5 506.0 C852.0 508.9 855.7 515.9 859.0 520.6 C862.3 525.3 866.3 530.0 869.4 534.2 C872.5 538.4 875.3 544.0 877.8 545.7 C880.2 547.5 883.4 545.4 884.1 544.7 C884.8 544.0 884.1 545.0 882.0 541.5 C879.9 538.0 873.2 526.7 871.5 523.7" fill="none" stroke="#2a2a2a" stroke-width="1.0" stroke-linecap="round" stroke-linejoin="round" opacity="1"/><path d="M863.1 513.3 C864.1 514.5 868.4 519.4 869.4 520.6" fill="none" stroke="#2a2a2a" stroke-width="0.8" stroke-linecap="round" stroke-linejoin="round" opacity="1"/><path d="M867.3 508.0 C868.3 509.2 870.3 511.9 873.6 515.4 C876.9 518.9 884.9 526.7 887.2 529.0" fill="none" stroke="#2a2a2a" stroke-width="0.8" stroke-linecap="round" stroke-linejoin="round" opacity="1"/><path d="M875.7 501.8 C876.1 502.3 877.4 504.4 877.8 504.9" fill="none" stroke="#2a2a2a" stroke-width="0.8" stroke-linecap="round" stroke-linejoin="round" opacity="1"/><path d="M881.0 510.1 C882.2 511.9 883.6 516.9 888.3 520.6 C893.0 524.3 905.4 530.7 909.2 532.1 C913.0 533.5 911.5 530.0 911.3 529.0 C911.1 528.0 911.6 528.2 908.1 525.8 C904.6 523.3 893.3 516.2 890.3 514.3" fill="none" stroke="#2a2a2a" stroke-width="0.9" stroke-linecap="round" stroke-linejoin="round" opacity="1"/><path d="M876.7 518.5 C878.6 520.6 884.6 527.6 888.3 531.1 C892.0 534.6 897.0 538.0 898.7 539.4" fill="none" stroke="#2a2a2a" stroke-width="0.8" stroke-linecap="round" stroke-linejoin="round" opacity="1"/><path d="M892.4 506.0 C893.5 505.7 895.9 504.8 898.7 504.4 C901.5 504.0 905.7 504.0 909.2 503.9 C912.7 503.8 916.3 503.7 919.6 503.9 C922.9 504.1 927.1 503.7 929.0 504.9 C930.9 506.1 931.2 508.9 931.2 511.2 C931.2 513.5 930.6 516.2 929.0 518.5 C927.4 520.8 924.0 522.9 921.7 524.8 C919.5 526.7 916.5 529.1 915.5 530.0" fill="none" stroke="#2a2a2a" stroke-width="0.9" stroke-linecap="round" stroke-linejoin="round" opacity="1"/><path d="M899 506V518M903 505V524M907 505V527M911 505V522M916 505V528M920 505V524M924 506V520M928 507V516" fill="none" stroke="#555" stroke-width="0.6" stroke-linecap="round" stroke-linejoin="round" opacity="1"/><path d="M917.6 493.4 C918.8 493.2 921.1 491.6 924.9 492.3 C928.7 493.0 935.9 495.8 940.6 497.6 C945.3 499.4 951.0 502.4 953.1 503.3" fill="none" stroke="#2a2a2a" stroke-width="1.0" stroke-linecap="round" stroke-linejoin="round" opacity="1"/><path d="M953.1 503.3 C956.1 502.2 966.7 496.1 970.9 496.5 C975.1 496.9 975.9 501.8 978.2 506.0 C980.5 510.2 986.1 516.7 984.5 521.6 C982.9 526.5 971.9 533.2 968.8 535.3 C965.7 537.4 967.3 537.7 965.7 534.2 C964.1 530.7 961.5 519.4 959.4 514.3 C957.3 509.1 954.1 505.1 953.1 503.3" fill="none" stroke="#2a2a2a" stroke-width="1.0" stroke-linecap="round" stroke-linejoin="round" opacity="1"/><path d="M898.7 544.7 C899.2 544.2 897.2 543.2 901.9 541.5 C906.6 539.8 924.7 533.7 927.0 534.2 C929.3 534.7 919.7 542.2 915.5 544.7 C911.3 547.2 904.7 548.9 901.9 548.9 C899.1 548.9 899.2 545.4 898.7 544.7" fill="none" stroke="#2a2a2a" stroke-width="0.9" stroke-linecap="round" stroke-linejoin="round" opacity="1"/><path d="M898.7 557.2 C899.1 556.7 897.1 556.2 900.8 554.1 C904.5 552.0 915.1 547.2 920.7 544.7 C926.3 542.2 934.3 538.2 934.3 539.4 C934.3 540.6 925.2 548.5 920.7 552.0 C916.2 555.5 910.6 559.0 907.1 560.4 C903.6 561.8 901.2 560.9 899.8 560.4 C898.4 559.9 898.9 557.7 898.7 557.2" fill="none" stroke="#2a2a2a" stroke-width="0.9" stroke-linecap="round" stroke-linejoin="round" opacity="1"/><path d="M909.2 564.6 C910.9 563.7 914.0 562.6 919.6 559.3 C925.2 556.0 938.0 548.4 942.7 544.7 C947.4 541.0 947.0 538.5 947.9 537.3" fill="none" stroke="#2a2a2a" stroke-width="0.9" stroke-linecap="round" stroke-linejoin="round" opacity="1"/><path d="M928.0 565.6 C927.8 565.1 924.9 565.8 927.0 562.5 C929.1 559.2 938.3 548.5 940.6 545.7" fill="none" stroke="#2a2a2a" stroke-width="0.9" stroke-linecap="round" stroke-linejoin="round" opacity="1"/><path d="M928.0 566.6 C928.4 566.8 927.5 569.8 930.1 567.7 C932.7 565.6 937.8 559.7 943.7 554.1 C949.6 548.5 962.0 537.5 965.7 534.2" fill="none" stroke="#2a2a2a" stroke-width="0.9" stroke-linecap="round" stroke-linejoin="round" opacity="1"/><path d="M932.2 529.0 C932.5 528.8 933.7 528.2 934.0 528.0" fill="none" stroke="#2a2a2a" stroke-width="0.8" stroke-linecap="round" stroke-linejoin="round" opacity="1"/><path d="M936.4 537.3 C937.5 536.3 941.7 532.1 942.7 531.1" fill="none" stroke="#2a2a2a" stroke-width="0.8" stroke-linecap="round" stroke-linejoin="round" opacity="1"/><path d="M977.6 522.7a3.5 3.5 0 1 0-7 0a3.5 3.5 0 1 0 7 0" fill="none" stroke="#222" stroke-width="0.8" stroke-linecap="round" stroke-linejoin="round" opacity="1"/><path d="M984.5 521.6 C986.2 520.7 993.2 517.3 995.0 516.4" fill="none" stroke="#2a2a2a" stroke-width="0.8" stroke-linecap="round" stroke-linejoin="round" opacity="1"/><path d="M988.7 514.3 C989.8 513.6 994.0 510.8 995.0 510.1" fill="none" stroke="#2a2a2a" stroke-width="0.8" stroke-linecap="round" stroke-linejoin="round" opacity="1"/><path d="M988.7 524.8 C989.8 524.6 994.0 523.9 995.0 523.7" fill="none" stroke="#2a2a2a" stroke-width="0.8" stroke-linecap="round" stroke-linejoin="round" opacity="1"/><path d="M982.4 501.8 C984.0 501.3 990.3 499.1 991.9 498.6" fill="none" stroke="#2a2a2a" stroke-width="0.8" stroke-linecap="round" stroke-linejoin="round" opacity="1"/><path d="M958.4 492.3 C960.0 487.2 966.2 467.1 967.8 462.0" fill="none" stroke="#2a2a2a" stroke-width="0.8" stroke-linecap="round" stroke-linejoin="round" opacity="1"/><path d="M840.0 537.5 C839.3 541.2 837.0 550.7 835.8 560.0 C834.5 569.3 833.3 583.6 832.5 593.3 C831.7 603.0 830.5 609.7 830.8 618.3 C831.1 626.9 833.2 636.4 834.2 645.0 C835.2 653.6 836.6 661.7 836.7 670.0 C836.8 678.3 834.5 686.1 835.0 695.0 C835.5 703.9 838.8 713.6 840.0 723.3 C841.2 733.0 842.1 748.3 842.5 753.3" fill="none" stroke="#2a2a2a" stroke-width="1.1" stroke-linecap="round" stroke-linejoin="round" opacity="1"/><path d="M842.5 753.3 C844.6 753.3 848.8 753.8 855.0 753.3 C861.2 752.8 875.3 752.2 880.0 750.0 C884.7 747.8 882.8 745.3 883.3 740.0 C883.8 734.7 884.1 727.2 883.3 718.3 C882.5 709.4 879.1 703.1 878.3 686.7 C877.5 670.3 878.3 634.5 878.3 620.0 C878.3 605.5 878.6 607.2 878.3 600.0 C878.0 592.8 876.7 583.4 876.7 576.7 C876.7 570.0 877.2 565.0 878.3 560.0 C879.4 555.0 882.5 548.9 883.3 546.7" fill="none" stroke="#2a2a2a" stroke-width="1.0" stroke-linecap="round" stroke-linejoin="round" opacity="1"/><path d="M885.0 560.0 C885.7 564.2 888.4 575.0 889.2 585.0 C890.0 595.0 889.9 608.6 890.0 620.0 C890.1 631.4 889.7 645.5 890.0 653.3 C890.3 661.1 891.4 664.5 891.7 666.7" fill="none" stroke="#2a2a2a" stroke-width="0.9" stroke-linecap="round" stroke-linejoin="round" opacity="1"/><path d="M844.2 753.3 C844.2 757.8 843.9 773.9 844.2 780.0 C844.5 786.1 845.4 780.6 846.0 790.0 C846.6 799.4 847.0 825.5 847.8 836.3 C848.6 847.1 850.0 844.6 850.6 854.8 C851.2 865.0 850.0 884.8 851.5 897.4 C853.0 910.0 858.6 918.4 859.8 930.7 C861.0 943.1 859.0 964.7 858.9 971.5" fill="none" stroke="#2a2a2a" stroke-width="1.0" stroke-linecap="round" stroke-linejoin="round" opacity="1"/><path d="M943.3 563.3 C942.5 565.5 940.0 568.9 938.3 576.7 C936.6 584.5 934.0 602.8 933.3 610.0 C932.6 617.2 934.8 614.2 934.2 620.0 C933.7 625.8 931.7 636.7 930.0 645.0 C928.3 653.3 925.5 660.3 924.2 670.0 C923.0 679.7 922.5 689.4 922.5 703.3 C922.5 717.2 923.2 737.2 924.2 753.3 C925.2 769.4 926.9 786.5 928.3 800.0 C929.7 813.5 931.9 828.7 932.6 834.4" fill="none" stroke="#2a2a2a" stroke-width="1.0" stroke-linecap="round" stroke-linejoin="round" opacity="1"/><path d="M948.3 550.0 C948.6 554.5 948.0 568.1 950.0 576.7 C952.0 585.3 956.7 594.5 960.0 601.7 C963.3 608.9 965.3 612.8 970.0 620.0 C974.7 627.2 981.9 637.5 988.3 645.0 C994.7 652.5 1004.1 659.7 1008.3 665.0 C1012.5 670.3 1012.5 674.8 1013.3 676.7" fill="none" stroke="#2a2a2a" stroke-width="0.9" stroke-linecap="round" stroke-linejoin="round" opacity="1"/><path d="M965.0 610.0 C963.9 612.8 960.2 621.7 958.3 626.7 C956.3 631.7 954.8 635.0 953.3 640.0 C951.8 645.0 950.0 650.0 949.2 656.7 C948.4 663.4 947.6 668.1 948.3 680.0 C949.0 691.9 951.9 714.7 953.3 728.3 C954.7 741.9 956.1 751.4 956.7 761.7 C957.3 772.0 956.0 777.6 957.0 790.0 C958.0 802.4 961.7 824.0 962.6 836.3 C963.5 848.6 961.1 851.6 962.6 864.0 C964.1 876.4 969.4 894.9 971.9 910.4 C974.4 925.9 976.5 949.0 977.4 956.7" fill="none" stroke="#2a2a2a" stroke-width="1.0" stroke-linecap="round" stroke-linejoin="round" opacity="1"/><path d="M988.3 526.7 C988.9 532.2 990.0 547.5 991.7 560.0 C993.4 572.5 996.6 591.7 998.3 601.7 C1000.0 611.7 1000.0 612.8 1001.7 620.0 C1003.4 627.2 1006.2 636.7 1008.3 645.0 C1010.4 653.3 1010.0 651.1 1014.2 670.0 C1018.4 688.9 1029.3 742.2 1033.3 758.3 C1037.3 774.4 1037.2 759.8 1038.3 766.7 C1039.4 773.7 1037.8 782.2 1040.0 800.0 C1042.2 817.8 1047.4 848.7 1051.5 873.3 C1055.6 897.9 1061.5 931.6 1064.4 947.4 C1067.3 963.1 1068.7 961.9 1069.0 967.8 C1069.3 973.7 1066.8 980.1 1066.3 982.6" fill="none" stroke="#2a2a2a" stroke-width="1.0" stroke-linecap="round" stroke-linejoin="round" opacity="1"/><path d="M949.2 676.7 C953.5 685.3 967.1 711.1 975.0 728.3 C982.9 745.5 992.5 768.0 996.7 780.0 C1000.9 792.0 997.4 782.9 1000.0 800.0 C1002.6 817.1 1008.3 856.2 1012.6 882.6 C1016.9 909.0 1023.4 945.9 1025.6 958.5" fill="none" stroke="#2a2a2a" stroke-width="1.0" stroke-linecap="round" stroke-linejoin="round" opacity="1"/><path d="M1017.2 940.0 C1018.3 943.4 1020.8 953.1 1023.7 960.4 C1026.6 967.6 1033.0 979.6 1034.8 983.5" fill="none" stroke="#2a2a2a" stroke-width="1.0" stroke-linecap="round" stroke-linejoin="round" opacity="1"/><path d="M954.3 910.4 C954.8 916.0 957.0 935.4 957.0 943.7 C957.0 952.0 954.8 957.6 954.3 960.4" fill="none" stroke="#2a2a2a" stroke-width="0.8" stroke-linecap="round" stroke-linejoin="round" opacity="1"/><path d="M858.9 971.5 C861.4 971.0 866.9 969.2 873.7 968.7 C880.5 968.2 894.4 968.4 899.6 968.7 C904.9 969.0 901.8 970.6 905.2 970.5 C908.6 970.4 914.5 968.2 920.0 967.8 C925.5 967.3 933.0 967.3 938.5 967.8 C944.0 968.2 949.3 971.1 953.3 970.5 C957.3 969.9 958.6 966.3 962.6 964.0 C966.6 961.7 974.9 957.9 977.4 956.7" fill="none" stroke="#2a2a2a" stroke-width="0.9" stroke-linecap="round" stroke-linejoin="round" opacity="1"/><path d="M868.1 963.1 C867.5 965.1 864.7 972.0 864.4 975.2 C864.1 978.5 866.0 981.4 866.3 982.6" fill="none" stroke="#2a2a2a" stroke-width="0.9" stroke-linecap="round" stroke-linejoin="round" opacity="1"/><path d="M905.2 970.5 C904.0 971.9 900.3 976.6 897.8 978.9 C895.3 981.2 891.6 983.5 890.4 984.4" fill="none" stroke="#2a2a2a" stroke-width="0.9" stroke-linecap="round" stroke-linejoin="round" opacity="1"/></g></g></svg>
<div class="a" style="left:0px;top:1004px;width:1920px;height:26px;background:#252525"></div>
<div class="a" style="left:0px;top:1003px;width:40px;height:1px;background:#3a3a3a"></div>
<div class="t" style="left:6px;top:1011.5px;font-size:14.8px;color:#e0e0e0;">Отменить</div>
<div class="a" style="left:0px;top:1030px;width:1920px;height:50px;background:linear-gradient(90deg,#dad6e5,#dcd6e6 50%,#e3d5e6)"></div>
<svg style="left:20px;top:1045px;" width="21" height="21" viewBox="0 0 21 21"><path d="M0 3l8.5-1.2v8.2H0zM9.5 1.7L20.5 0v10H9.5zM0 11h8.5v8.2L0 18zM9.5 11h11v10L9.5 19.3z" fill="#000"/></svg>
<div class="a" style="left:61px;top:1030px;width:428px;height:50px;background:#fff"></div>
<svg style="left:75px;top:1045px;" width="21" height="21" viewBox="0 0 21 21"><circle cx="13" cy="8" r="6" fill="none" stroke="#000" stroke-width="1.6"/><path d="M8.8 12.2L1.5 19.5" stroke="#000" stroke-width="1.8"/></svg>
<div class="t" style="left:110px;top:1047px;font-size:18.2px;color:#222;">Введите здесь текст для поиска</div>
<svg style="left:509px;top:1045px;" width="22" height="20" viewBox="0 0 22 20"><path d="M0.5 1h12M0.5 19h12M2.5 1v2M10.5 1v2M2.5 19v-2M10.5 19v-2" stroke="#000" stroke-width="1.2"/><rect x="1.5" y="5.5" width="10" height="9" fill="none" stroke="#000" stroke-width="1.3"/><path d="M19 1v18" stroke="#000" stroke-width="1.2"/><rect x="17.5" y="7" width="3" height="3" fill="#000"/></svg>
<svg style="left:570px;top:1042px;" width="28" height="24" viewBox="0 0 28 24"><path d="M0 2h9l2 2h17v19H0z" fill="#e8b020"/><path d="M0 6h28v17H0z" fill="#fcd25a"/><path d="M5.5 23v-8h17v8h-4v-4h-9v4z" fill="#2b8ad8"/></svg>
<svg style="left:632px;top:1041px" width="28" height="28" viewBox="-14 -14 28 28"><path d="M0-14A14 14 0 0 1 12.12 7L6.06 3.5A7 7 0 0 0 0-7z" fill="none"/><circle r="14" fill="#2ea44f"/><path d="M0 0L-12.12-7A14 14 0 0 1 12.12-7z" fill="#db4437"/><path d="M0 0L12.12-7A14 14 0 0 1 0 14z" fill="#fcc934"/><path d="M-12.12-7L0 0 0 14A14 14 0 0 1-12.12-7z" fill="#1e8e3e"/><circle r="6.5" fill="#fff"/><circle r="5" fill="#4285f4"/></svg>
<div class="a" style="left:678px;top:1030px;width:61px;height:50px;background:#ece9f1"></div>
<div class="a" style="left:678px;top:1077px;width:61px;height:3px;background:#0a78d4"></div>
<div class="a" style="left:693px;top:1041px;width:29px;height:28px;border-radius:5px;background:#f4f4f4;box-shadow:0 0 1px #bbb"></div>
<svg style="left:693px;top:1041px" width="29" height="28" viewBox="0 0 24 24"><defs><clipPath id="drp2"><path d="M13.6 4.3C10 5 5 8.7 5 13.8 5 17.8 8 20.8 12 20.8 16 20.8 19 17.8 19 13.8 19 10.6 17 7.8 13.6 4.3z"/></clipPath></defs><g clip-path="url(#drp2)"><rect x="0" y="0" width="24" height="24" fill="#18a818"/><ellipse cx="17.5" cy="13.5" rx="4.5" ry="7" fill="#f0f000"/><path d="M4 11C9 9 13 8 18 9.5 17 15 13 17 9 17.5 5 17.5 4 16 4 11z" fill="#10d8e0"/><path d="M4 3H15C15 8 12 11 8 12L4 12z" fill="#ff2a40"/><path d="M10 3H17L15.5 8C13.5 9 11 9 10 8z" fill="#ffa030"/></g></svg>
<svg style="left:756px;top:1040px" width="30" height="30" viewBox="-14 -14 28 28"><path d="M0-14A14 14 0 0 1 12.12 7L6.06 3.5A7 7 0 0 0 0-7z" fill="none"/><circle r="14" fill="#2ea44f"/><path d="M0 0L-12.12-7A14 14 0 0 1 12.12-7z" fill="#db4437"/><path d="M0 0L12.12-7A14 14 0 0 1 0 14z" fill="#fcc934"/><path d="M-12.12-7L0 0 0 14A14 14 0 0 1-12.12-7z" fill="#1e8e3e"/><circle r="6.5" fill="#fff"/><circle r="5" fill="#4285f4"/></svg>
<div class="a" style="left:772px;top:1052px;width:22px;height:22px;border-radius:50%;background:#2a6ad8"></div>
<svg style="left:776px;top:1056px;" width="14" height="14" viewBox="0 0 14 14"><path d="M7 2l2 5 4 1-4 1-2 4-2-4-4-1 4-1z" fill="#e84a4a"/></svg>
<div class="a" style="left:745px;top:1077px;width:51px;height:3px;background:#0a78d4"></div>
<div class="a" style="left:1234px;top:1042px;width:61px;height:25px;background:#fff"></div>
<div class="a" style="left:1237px;top:1045px;width:40px;height:19px;background:#1b9a47"></div>
<div class="a" style="left:1277px;top:1045px;width:16px;height:19px;background:#000"></div>
<div class="a" style="left:1295px;top:1050px;width:2px;height:10px;background:#fff"></div>
<div class="t" style="left:1247px;top:1047px;font-size:17px;color:#fff;">68%</div>
<svg style="left:1434px;top:1043px;" width="24" height="24" viewBox="0 0 24 24"><defs><linearGradient id="mn" x1="0" y1="0" x2="0.3" y2="1"><stop offset="0" stop-color="#ffe000"/><stop offset="1" stop-color="#ffa000"/></linearGradient></defs><path d="M15 1.5A11 11 0 1 1 1 15.5 9.5 9.5 0 0 0 15 1.5z" fill="url(#mn)"/></svg>
<div class="t" style="left:1472px;top:1048.5px;font-size:16.2px;color:#000;">14°C</div>
<div class="t" style="left:1519px;top:1048.5px;font-size:17px;color:#000;">Ясно</div>
<svg style="left:1580px;top:1050px;" width="17" height="10" viewBox="0 0 17 10"><path d="M1 9l7.5-7.5L16 9" fill="none" stroke="#000" stroke-width="1.3"/></svg>
<svg style="left:1611px;top:1045px;" width="16" height="20" viewBox="0 0 16 20"><path d="M2 3.5c3-2 8-2 10 0M2 16.5c3 2 8 2 10 0" fill="none" stroke="#000" stroke-width="1"/><rect x="1.5" y="6.5" width="9" height="7" rx="1" fill="none" stroke="#000" stroke-width="1.2"/><path d="M10.5 10l4-3v6z" fill="none" stroke="#000" stroke-width="1.1"/></svg>
<svg style="left:1637px;top:1046px;" width="22" height="19" viewBox="0 0 22 19"><path d="M4 14a3.5 3.5 0 0 1 0-7 5.5 5.5 0 0 1 10.5-1.5 4 4 0 0 1 3.5 5.5z" fill="#707070"/><circle cx="15" cy="13.5" r="4.5" fill="#fff"/><path d="M12.5 12.5a2.6 2.6 0 0 1 4.8-0.8M17.5 14.5a2.6 2.6 0 0 1-4.8 0.8" fill="none" stroke="#0a78d4" stroke-width="1.3"/></svg>
<svg style="left:1671px;top:1047px;" width="17" height="16" viewBox="0 0 17 16"><path d="M1.5 14a13 13 0 0 1 13-13M4.5 14a10 10 0 0 1 10-10M7.5 14a7 7 0 0 1 7-7" fill="none" stroke="#999" stroke-width="1.1"/><circle cx="14" cy="14" r="1.4" fill="#000"/></svg>
<svg style="left:1699px;top:1049px;" width="20" height="12" viewBox="0 0 20 12"><rect x="0.6" y="0.6" width="16.5" height="10.5" fill="none" stroke="#000" stroke-width="1.2"/><rect x="2.5" y="2.5" width="8" height="6.8" fill="#000"/><rect x="17.5" y="3.5" width="2" height="5" fill="#000"/></svg>
<div class="t" style="left:1732px;top:1050px;font-size:12.9px;color:#000;">РУС</div>
<div class="t" style="left:1793px;top:1037.5px;font-size:13.9px;color:#000;">00:18</div>
<div class="t" style="left:1776px;top:1060.5px;font-size:13.8px;color:#000;">29.08.2021</div>
<svg style="left:1868px;top:1044px;" width="26" height="26" viewBox="0 0 26 26"><path d="M1 1h18v12H8l-4 4v-4H1z" fill="#000"/><path d="M4 4.5h12M4 7.5h12M4 10.5h8" stroke="#fff" stroke-width="1"/><circle cx="20" cy="20" r="9" fill="#d0d0d4" stroke="#999" stroke-width="1"/><text x="20" y="25" font-size="13" text-anchor="middle" fill="#000" font-family="Liberation Sans">1</text></svg>
<div class="a" style="left:1914px;top:1030px;width:1px;height:50px;background:#b0a8b8"></div>
<div class="a" style="left:1445px;top:852px;width:455px;height:164px;background:#d7d6d6;box-shadow:0 0 2px rgba(0,0,0,.2)"></div>
<div class="a" style="left:1465px;top:876px;width:20px;height:20px;background:#353535"></div>
<svg style="left:1465px;top:876px;" width="20" height="20" viewBox="0 0 20 20"><path d="M4 4h4l1 12H5z" fill="#f8c020"/><path d="M9 15a2.5 2.5 0 0 1 1-5 3 3 0 0 1 6 0.5 2.3 2.3 0 0 1 1 4.5z" fill="#2a8ae0"/></svg>
<div class="t" style="left:1495px;top:879px;font-size:14.5px;color:#111;">OneDrive</div>
<svg style="left:1858px;top:879px;" width="13" height="13" viewBox="0 0 13 13"><path d="M0.5 0.5l12 12M12.5 0.5l-12 12" stroke="#444" stroke-width="1.1"/></svg>
<svg style="left:1466px;top:929px" width="74" height="50" viewBox="0 0 74 50"><defs><clipPath id="cc"><path d="M14 47C6 47 1 41 2 33 2.5 26 7 21 13 19.5 16 9 24 3 35 3 45 3 52 9 55 17 57 16.5 59 16.5 61 17 68 19 72 25 71.5 33 71 41 65 47 58 47Z"/></clipPath></defs><g clip-path="url(#cc)"><rect width="74" height="50" fill="#1f9de8"/><path d="M0 0H40L60 18 0 44Z" fill="#0f78d4"/><path d="M18 0H60V19L36 22Z" fill="#0364b8"/><path d="M48 22L62 16 74 20V44Z" fill="#1490df"/><path d="M0 46L36 20 74 44V50H0Z" fill="#28a8ea"/></g></svg>
<div class="t" style="left:1561px;top:920px;font-size:17.9px;color:#000;font-weight:bold">Снимок экрана сохранен</div>
<div class="t" style="left:1561px;top:944.5px;font-size:18.5px;color:#555;">Снимок экрана добавлен в ваше</div>
<div class="t" style="left:1561px;top:970px;font-size:18.2px;color:#555;">хранилище OneDrive.</div>
</body></html>
